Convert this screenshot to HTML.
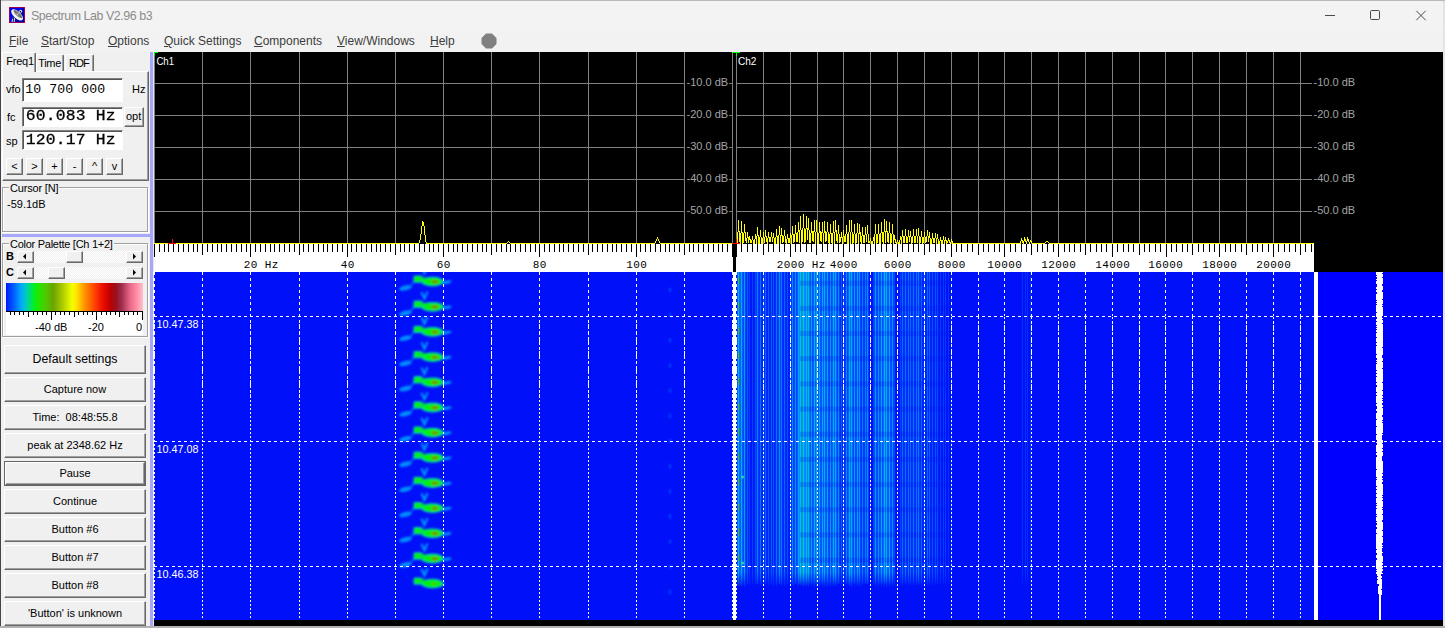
<!DOCTYPE html>
<html lang="en"><head><meta charset="utf-8"><title>Spectrum Lab V2.96 b3</title>
<style>

html,body{margin:0;padding:0}
body{width:1445px;height:628px;position:relative;overflow:hidden;background:#f0f0f0;font-family:'Liberation Sans', sans-serif;font-size:11px;color:#000}
.abs{position:absolute}
.t{position:absolute;white-space:nowrap;line-height:1}
#titlebar{left:1px;top:1px;width:1443px;height:30px;background:#f3f3f3;border-radius:7px 7px 0 0}
#menubar{left:1px;top:31px;width:1443px;height:21px;background:#f2f2f2}
.menu{position:absolute;top:34px;font-size:12px;line-height:14px;color:#3c3c3c;white-space:nowrap}
.menu u{text-decoration:underline;text-underline-offset:1px}
.btn{position:absolute;box-sizing:border-box;background:#f0f0f0;border-top:1px solid #fff;border-left:1px solid #fff;border-right:1px solid #696969;border-bottom:1px solid #696969;box-shadow:inset -1px -1px 0 #a0a0a0;text-align:center;white-space:nowrap}
.edit{position:absolute;box-sizing:border-box;background:#fff;border-top:1px solid #808080;border-left:1px solid #808080;border-right:1px solid #fff;border-bottom:1px solid #fff;box-shadow:inset 1px 1px 0 #555}
.grp{position:absolute;box-sizing:border-box;border:1px solid #a0a0a0;box-shadow:1px 1px 0 #fff, inset 1px 1px 0 #fff}
.grp>span{position:absolute;left:6px;top:-7px;letter-spacing:-0.17px;background:#f0f0f0;padding:0 1px;line-height:13px;white-space:nowrap}

</style></head><body>
<div class="abs" style="left:0;top:0;width:1445px;height:1px;background:#b9b9b9"></div>
<div class="abs" style="left:0;top:0;width:1px;height:628px;background:#44444a"></div>
<div class="abs" style="left:1px;top:1px;width:1px;height:625px;background:#f4f4f4"></div>
<div class="abs" id="titlebar"></div>
<div class="abs" id="menubar"></div>
<div class="abs" style="left:1443px;top:1px;width:2px;height:627px;background:#e4e4e4"></div>
<div class="abs" style="left:0;top:626px;width:1445px;height:2px;background:#b2b2b2"></div>
<svg class="abs" style="left:9px;top:7px" width="16" height="16" viewBox="0 0 16 16">
<rect x="0" y="0" width="16" height="16" fill="#0000a8"/>
<polygon points="0,0 16,0 0,16" fill="#0000f0"/>
<rect x="0.5" y="0.5" width="15" height="15" fill="none" stroke="#900060" stroke-width="1"/>
<rect x="0" y="0" width="1" height="1" fill="#f00000"/><rect x="15" y="0" width="1" height="1" fill="#f00000"/>
<rect x="0" y="15" width="1" height="1" fill="#f00000"/><rect x="15" y="15" width="1" height="1" fill="#f00000"/>
<path d="M4.2 10 L3 15 M5.6 11 L5.2 15" stroke="#c8c8d8" stroke-width="1.1"/>
<path d="M3.6 10.2 L4.4 12" stroke="#000" stroke-width="1.2"/>
<ellipse cx="8.1" cy="7.9" rx="7.3" ry="3.5" transform="rotate(42 8.1 7.9)" fill="#f4f4f0"/>
<ellipse cx="8.9" cy="7.1" rx="5.6" ry="2.1" transform="rotate(42 8.9 7.1)" fill="#8a8a8a"/>
<path d="M5 3.6 L12.8 10.6" stroke="#4a4a4a" stroke-width="0.8"/>
<path d="M8.4 7.4 L10.6 5.2" stroke="#c0c0c0" stroke-width="0.9"/>
<circle cx="8.3" cy="7.6" r="1.1" fill="#b8b8b8"/>
<circle cx="11.6" cy="4.2" r="1.5" fill="#f0f0e8"/><circle cx="11.4" cy="4.4" r="0.75" fill="#000"/>
</svg>
<div class="t" style="left:31px;top:8.6px;font-size:12.4px;line-height:14px;color:#8c8c8c;letter-spacing:-0.43px">Spectrum Lab V2.96 b3</div>
<svg class="abs" style="left:1310px;top:1px" width="133" height="30" viewBox="0 0 133 30" fill="none" stroke="#4a4a4a" stroke-width="1">
<path d="M15 14.5 H25"/>
<rect x="60.5" y="9.5" width="9" height="9" rx="1.2"/>
<path d="M106.3 9.8 L115.7 19.2 M115.7 9.8 L106.3 19.2"/>
</svg>
<div class="menu" style="left:9px"><u>F</u>ile</div>
<div class="menu" style="left:41px"><u>S</u>tart/Stop</div>
<div class="menu" style="left:108px"><u>O</u>ptions</div>
<div class="menu" style="left:164px"><u>Q</u>uick Settings</div>
<div class="menu" style="left:254px"><u>C</u>omponents</div>
<div class="menu" style="left:337px"><u>V</u>iew/Windows</div>
<div class="menu" style="left:430px"><u>H</u>elp</div>
<svg class="abs" style="left:481px;top:33px" width="16" height="16" viewBox="0 0 16 16"><polygon points="5,0.5 11,0.5 15.5,5 15.5,11 11,15.5 5,15.5 0.5,11 0.5,5" fill="#808080"/></svg>
<div class="abs" style="left:2px;top:52px;width:148px;height:574px;background:#f0f0f0"></div>
<div class="abs" style="left:150px;top:52px;width:3px;height:574px;background:#a6a6fb"></div>
<div class="abs" style="left:153px;top:52px;width:1px;height:574px;background:#e6e6f6"></div>
<div class="abs" style="left:2px;top:234px;width:148px;height:3px;background:#a6a6fb"></div>
<div class="abs" style="left:2px;top:71px;width:147px;height:110px;box-sizing:border-box;border-left:1px solid #fff;border-top:1px solid #fff;border-right:1px solid #696969;border-bottom:1px solid #696969;box-shadow:inset -1px -1px 0 #a0a0a0"></div>
<div class="abs" style="left:36px;top:54px;width:28px;height:17px;box-sizing:border-box;border-left:1px solid #fff;border-top:1px solid #fff;border-right:1px solid #696969;box-shadow:inset -1px 0 0 #a0a0a0;border-radius:2px 2px 0 0"></div>
<div class="abs" style="left:65px;top:54px;width:29px;height:17px;box-sizing:border-box;border-left:1px solid #fff;border-top:1px solid #fff;border-right:1px solid #696969;box-shadow:inset -1px 0 0 #a0a0a0;border-radius:2px 2px 0 0"></div>
<div class="abs" style="left:2px;top:52px;width:34px;height:20px;box-sizing:border-box;background:#f0f0f0;border-left:1px solid #fff;border-top:1px solid #fff;border-right:1px solid #696969;box-shadow:inset -1px 0 0 #a0a0a0;border-radius:2px 2px 0 0"></div>
<div class="t" style="left:6.3px;top:55.99px;font-size:11px;font-family:'Liberation Sans', sans-serif;letter-spacing:-0.25px;">Freq1</div>
<div class="t" style="left:38.3px;top:58.19px;font-size:11px;font-family:'Liberation Sans', sans-serif;letter-spacing:-0.35px;">Time</div>
<div class="t" style="left:69px;top:58.19px;font-size:11px;font-family:'Liberation Sans', sans-serif;letter-spacing:-0.9px;">RDF</div>
<div class="t" style="left:6px;top:83.99px;font-size:11px;font-family:'Liberation Sans', sans-serif;">vfo</div>
<div class="edit" style="left:22px;top:78px;width:101px;height:24px"></div>
<div class="t" style="left:25.3px;top:82.88px;font-size:13.2px;font-family:'Liberation Mono', monospace;letter-spacing:0.08px;">10 700 000</div>
<div class="t" style="left:132px;top:83.99px;font-size:11px;font-family:'Liberation Sans', sans-serif;">Hz</div>
<div class="t" style="left:7px;top:112.49px;font-size:11px;font-family:'Liberation Sans', sans-serif;">fc</div>
<div class="edit" style="left:22px;top:107px;width:101px;height:20px"></div>
<div class="t" style="left:25.8px;top:108.06px;font-size:16.35px;font-family:'Liberation Mono', monospace;font-weight:normal;letter-spacing:0.19px;-webkit-text-stroke:0.32px #000;transform:scaleY(0.88);transform-origin:0 76.68%;">60.083 Hz</div>
<div class="btn" style="left:124px;top:107px;width:20px;height:20px"></div>
<div class="t" style="left:126px;top:111.49px;font-size:11px;font-family:'Liberation Sans', sans-serif;">opt</div>
<div class="t" style="left:6px;top:136.49px;font-size:11px;font-family:'Liberation Sans', sans-serif;">sp</div>
<div class="edit" style="left:22px;top:130px;width:101px;height:20px"></div>
<div class="t" style="left:25.8px;top:132.06px;font-size:16.35px;font-family:'Liberation Mono', monospace;font-weight:normal;letter-spacing:0.19px;-webkit-text-stroke:0.32px #000;transform:scaleY(0.88);transform-origin:0 76.68%;">120.17 Hz</div>
<div class="btn" style="left:6px;top:158px;width:17px;height:17px;font-size:11px;line-height:14px">&lt;</div>
<div class="btn" style="left:26px;top:158px;width:17px;height:17px;font-size:11px;line-height:14px">&gt;</div>
<div class="btn" style="left:46px;top:158px;width:17px;height:17px;font-size:11px;line-height:14px">+</div>
<div class="btn" style="left:66px;top:158px;width:17px;height:17px;font-size:11px;line-height:14px">-</div>
<div class="btn" style="left:86px;top:158px;width:17px;height:17px;font-size:11px;line-height:14px">^</div>
<div class="btn" style="left:106px;top:158px;width:17px;height:17px;font-size:11px;line-height:14px">v</div>
<div class="grp" style="left:2px;top:187px;width:146px;height:45px"><span style="left:6px;top:-6px">Cursor [N]</span></div>
<div class="t" style="left:7px;top:198.89px;font-size:11px;font-family:'Liberation Sans', sans-serif;">-59.1dB</div>
<div class="grp" style="left:2px;top:243px;width:146px;height:94px"><span style="left:6px;top:-6px;letter-spacing:-0.27px">Color Palette [Ch 1+2]</span></div>
<div class="t" style="left:6px;top:251.09px;font-size:11px;font-family:'Liberation Sans', sans-serif;font-weight:bold;">B</div>
<div class="t" style="left:6px;top:267.09px;font-size:11px;font-family:'Liberation Sans', sans-serif;font-weight:bold;">C</div>
<div class="abs" style="left:17px;top:251px;width:126px;height:12px;background-color:#fff;background-image:linear-gradient(45deg,#f0f0f0 25%,transparent 25%,transparent 75%,#f0f0f0 75%),linear-gradient(45deg,#f0f0f0 25%,transparent 25%,transparent 75%,#f0f0f0 75%);background-size:2px 2px;background-position:0 0,1px 1px"></div><div class="btn" style="left:17px;top:251px;width:17px;height:12px"></div><svg class="abs" style="left:0;top:0" width="150" height="300"><polygon points="23,256.5 26,253.5 26,259.5" fill="#000"/></svg><div class="btn" style="left:126px;top:251px;width:17px;height:12px"></div><svg class="abs" style="left:0;top:0" width="150" height="300"><polygon points="136,256.5 133,253.5 133,259.5" fill="#000"/></svg><div class="btn" style="left:66px;top:251px;width:17px;height:12px"></div>
<div class="abs" style="left:17px;top:267px;width:126px;height:12px;background-color:#fff;background-image:linear-gradient(45deg,#f0f0f0 25%,transparent 25%,transparent 75%,#f0f0f0 75%),linear-gradient(45deg,#f0f0f0 25%,transparent 25%,transparent 75%,#f0f0f0 75%);background-size:2px 2px;background-position:0 0,1px 1px"></div><div class="btn" style="left:17px;top:267px;width:17px;height:12px"></div><svg class="abs" style="left:0;top:0" width="150" height="300"><polygon points="23,272.5 26,269.5 26,275.5" fill="#000"/></svg><div class="btn" style="left:126px;top:267px;width:17px;height:12px"></div><svg class="abs" style="left:0;top:0" width="150" height="300"><polygon points="136,272.5 133,269.5 133,275.5" fill="#000"/></svg><div class="btn" style="left:48px;top:267px;width:17px;height:12px"></div>
<div class="abs" style="left:6px;top:283px;width:137px;height:28px;background:linear-gradient(to right,#0018ff 0px,#0060ff 8px,#00a8ff 15px,#00d0b0 21px,#00f020 28px,#20e800 32px,#50c800 40px,#6aa400 47px,#a8c800 56px,#f0ff00 66px,#ffe800 70px,#ff9800 78px,#ff4800 88px,#f01000 96px,#c00000 104px,#981020 110px,#a03050 116px,#e86888 124px,#ff88a0 130px,#ffc0cc 137px)"></div>
<div class="abs" style="left:6px;top:311px;width:137px;height:24px;background:#fff"></div>
<svg class="abs" style="left:0;top:300px" width="150" height="40" shape-rendering="crispEdges"><rect x="6" y="11" width="137" height="1" fill="#000"/><rect x="142" y="11" width="1" height="9" fill="#000"/><rect x="137" y="11" width="1" height="4" fill="#000"/><rect x="133" y="11" width="1" height="4" fill="#000"/><rect x="128" y="11" width="1" height="4" fill="#000"/><rect x="124" y="11" width="1" height="4" fill="#000"/><rect x="119" y="11" width="1" height="6" fill="#000"/><rect x="115" y="11" width="1" height="4" fill="#000"/><rect x="110" y="11" width="1" height="4" fill="#000"/><rect x="106" y="11" width="1" height="4" fill="#000"/><rect x="101" y="11" width="1" height="4" fill="#000"/><rect x="96" y="11" width="1" height="9" fill="#000"/><rect x="92" y="11" width="1" height="4" fill="#000"/><rect x="87" y="11" width="1" height="4" fill="#000"/><rect x="83" y="11" width="1" height="4" fill="#000"/><rect x="78" y="11" width="1" height="4" fill="#000"/><rect x="74" y="11" width="1" height="6" fill="#000"/><rect x="69" y="11" width="1" height="4" fill="#000"/><rect x="64" y="11" width="1" height="4" fill="#000"/><rect x="60" y="11" width="1" height="4" fill="#000"/><rect x="55" y="11" width="1" height="4" fill="#000"/><rect x="51" y="11" width="1" height="9" fill="#000"/><rect x="46" y="11" width="1" height="4" fill="#000"/><rect x="42" y="11" width="1" height="4" fill="#000"/><rect x="37" y="11" width="1" height="4" fill="#000"/><rect x="33" y="11" width="1" height="4" fill="#000"/><rect x="28" y="11" width="1" height="6" fill="#000"/><rect x="23" y="11" width="1" height="4" fill="#000"/><rect x="19" y="11" width="1" height="4" fill="#000"/><rect x="14" y="11" width="1" height="4" fill="#000"/><rect x="10" y="11" width="1" height="4" fill="#000"/></svg>
<div class="t" style="left:35px;top:322.29px;font-size:11px;font-family:'Liberation Sans', sans-serif;">-40 dB</div>
<div class="t" style="left:88px;top:322.29px;font-size:11px;font-family:'Liberation Sans', sans-serif;">-20</div>
<div class="t" style="left:136px;top:322.29px;font-size:11px;font-family:'Liberation Sans', sans-serif;">0</div>
<div class="btn" style="left:4px;top:345px;width:142px;height:29px"></div>
<div class="t" style="left:4px;width:142px;text-align:center;top:352px;font-size:12.3px;line-height:14px">Default settings</div>
<div class="btn" style="left:4px;top:377px;width:142px;height:25px"></div>
<div class="t" style="left:4px;width:142px;text-align:center;top:383px;font-size:11px;line-height:13px">Capture now</div>
<div class="btn" style="left:4px;top:405px;width:142px;height:25px"></div>
<div class="t" style="left:4px;width:142px;text-align:center;top:411px;font-size:11px;line-height:13px">Time:&nbsp; 08:48:55.8</div>
<div class="btn" style="left:4px;top:433px;width:142px;height:25px"></div>
<div class="t" style="left:4px;width:142px;text-align:center;top:439px;font-size:11px;line-height:13px">peak at 2348.62 Hz</div>
<div class="abs" style="left:4px;top:461px;width:142px;height:25px;box-sizing:border-box;border:1px solid #646464"></div>
<div class="btn" style="left:5px;top:462px;width:140px;height:23px"></div>
<div class="t" style="left:4px;width:142px;text-align:center;top:467px;font-size:11px;line-height:13px">Pause</div>
<div class="btn" style="left:4px;top:489px;width:142px;height:25px"></div>
<div class="t" style="left:4px;width:142px;text-align:center;top:495px;font-size:11px;line-height:13px">Continue</div>
<div class="btn" style="left:4px;top:517px;width:142px;height:25px"></div>
<div class="t" style="left:4px;width:142px;text-align:center;top:523px;font-size:11px;line-height:13px">Button #6</div>
<div class="btn" style="left:4px;top:545px;width:142px;height:25px"></div>
<div class="t" style="left:4px;width:142px;text-align:center;top:551px;font-size:11px;line-height:13px">Button #7</div>
<div class="btn" style="left:4px;top:573px;width:142px;height:25px"></div>
<div class="t" style="left:4px;width:142px;text-align:center;top:579px;font-size:11px;line-height:13px">Button #8</div>
<div class="btn" style="left:4px;top:601px;width:142px;height:25px"></div>
<div class="t" style="left:4px;width:142px;text-align:center;top:607px;font-size:11px;line-height:13px">'Button' is unknown</div>
<svg class="abs" style="left:0;top:0" width="1445" height="628" viewBox="0 0 1445 628" shape-rendering="crispEdges"><rect x="154" y="52" width="1289" height="574" fill="#000"/><rect x="154" y="52" width="1" height="192" fill="#808080"/><rect x="202" y="52" width="1" height="192" fill="#808080"/><rect x="250" y="52" width="1" height="192" fill="#808080"/><rect x="299" y="52" width="1" height="192" fill="#808080"/><rect x="347" y="52" width="1" height="192" fill="#808080"/><rect x="395" y="52" width="1" height="192" fill="#808080"/><rect x="443" y="52" width="1" height="192" fill="#808080"/><rect x="491" y="52" width="1" height="192" fill="#808080"/><rect x="539" y="52" width="1" height="192" fill="#808080"/><rect x="588" y="52" width="1" height="192" fill="#808080"/><rect x="636" y="52" width="1" height="192" fill="#808080"/><rect x="684" y="52" width="1" height="192" fill="#808080"/><rect x="732" y="52" width="1" height="192" fill="#808080"/><rect x="736" y="52" width="1" height="192" fill="#808080"/><rect x="763" y="52" width="1" height="192" fill="#808080"/><rect x="790" y="52" width="1" height="192" fill="#808080"/><rect x="817" y="52" width="1" height="192" fill="#808080"/><rect x="843" y="52" width="1" height="192" fill="#808080"/><rect x="870" y="52" width="1" height="192" fill="#808080"/><rect x="897" y="52" width="1" height="192" fill="#808080"/><rect x="924" y="52" width="1" height="192" fill="#808080"/><rect x="951" y="52" width="1" height="192" fill="#808080"/><rect x="978" y="52" width="1" height="192" fill="#808080"/><rect x="1004" y="52" width="1" height="192" fill="#808080"/><rect x="1031" y="52" width="1" height="192" fill="#808080"/><rect x="1058" y="52" width="1" height="192" fill="#808080"/><rect x="1085" y="52" width="1" height="192" fill="#808080"/><rect x="1112" y="52" width="1" height="192" fill="#808080"/><rect x="1139" y="52" width="1" height="192" fill="#808080"/><rect x="1165" y="52" width="1" height="192" fill="#808080"/><rect x="1192" y="52" width="1" height="192" fill="#808080"/><rect x="1219" y="52" width="1" height="192" fill="#808080"/><rect x="1246" y="52" width="1" height="192" fill="#808080"/><rect x="1273" y="52" width="1" height="192" fill="#808080"/><rect x="1300" y="52" width="1" height="192" fill="#808080"/><rect x="154" y="83" width="531" height="1" fill="#808080"/><rect x="729" y="83" width="4" height="1" fill="#808080"/><rect x="736" y="83" width="576" height="1" fill="#808080"/><text x="686.5" y="86.2" font-family="'Liberation Sans', sans-serif" font-size="11" fill="#a4a4a4">-10.0 dB</text><text x="1313.5" y="86.2" font-family="'Liberation Sans', sans-serif" font-size="11" fill="#a4a4a4">-10.0 dB</text><rect x="154" y="115" width="531" height="1" fill="#808080"/><rect x="729" y="115" width="4" height="1" fill="#808080"/><rect x="736" y="115" width="576" height="1" fill="#808080"/><text x="686.5" y="118.2" font-family="'Liberation Sans', sans-serif" font-size="11" fill="#a4a4a4">-20.0 dB</text><text x="1313.5" y="118.2" font-family="'Liberation Sans', sans-serif" font-size="11" fill="#a4a4a4">-20.0 dB</text><rect x="154" y="147" width="531" height="1" fill="#808080"/><rect x="729" y="147" width="4" height="1" fill="#808080"/><rect x="736" y="147" width="576" height="1" fill="#808080"/><text x="686.5" y="150.2" font-family="'Liberation Sans', sans-serif" font-size="11" fill="#a4a4a4">-30.0 dB</text><text x="1313.5" y="150.2" font-family="'Liberation Sans', sans-serif" font-size="11" fill="#a4a4a4">-30.0 dB</text><rect x="154" y="179" width="531" height="1" fill="#808080"/><rect x="729" y="179" width="4" height="1" fill="#808080"/><rect x="736" y="179" width="576" height="1" fill="#808080"/><text x="686.5" y="182.2" font-family="'Liberation Sans', sans-serif" font-size="11" fill="#a4a4a4">-40.0 dB</text><text x="1313.5" y="182.2" font-family="'Liberation Sans', sans-serif" font-size="11" fill="#a4a4a4">-40.0 dB</text><rect x="154" y="211" width="531" height="1" fill="#808080"/><rect x="729" y="211" width="4" height="1" fill="#808080"/><rect x="736" y="211" width="576" height="1" fill="#808080"/><text x="686.5" y="214.2" font-family="'Liberation Sans', sans-serif" font-size="11" fill="#a4a4a4">-50.0 dB</text><text x="1313.5" y="214.2" font-family="'Liberation Sans', sans-serif" font-size="11" fill="#a4a4a4">-50.0 dB</text><text x="156.4" y="65" font-family="'Liberation Sans', sans-serif" font-size="10.5" fill="#fff" textLength="17.6" lengthAdjust="spacingAndGlyphs">Ch1</text><text x="738" y="65" font-family="'Liberation Sans', sans-serif" font-size="10.5" fill="#fff" textLength="18.4" lengthAdjust="spacingAndGlyphs">Ch2</text><rect x="154" y="52" width="4" height="1" fill="#00ff00"/><rect x="154" y="52" width="1" height="4" fill="#00ff00"/><rect x="732" y="52" width="8" height="1" fill="#00ff00"/><rect x="736" y="52" width="1" height="4" fill="#00ff00"/><path d="M736 243h1v1h-1zM737 232h1v11h-1zM738 220h1v12h-1zM739 231h1v11h-1zM740 233h1v11h-1zM741 221h1v12h-1zM742 232h1v12h-1zM743 233h1v10h-1zM744 224h1v9h-1zM745 232h1v9h-1zM746 238h1v5h-1zM747 232h1v6h-1zM748 237h1v6h-1zM749 236h1v4h-1zM750 239h1v4h-1zM751 240h1v3h-1zM752 236h1v4h-1zM753 240h1v4h-1zM754 239h1v5h-1zM755 234h1v5h-1zM756 236h1v8h-1zM757 227h1v9h-1zM758 235h1v9h-1zM759 237h1v7h-1zM760 230h1v7h-1zM761 237h1v7h-1zM762 238h1v6h-1zM763 232h1v6h-1zM764 237h1v6h-1zM765 230h1v7h-1zM766 236h1v6h-1zM767 238h1v6h-1zM768 232h1v6h-1zM769 237h1v5h-1zM770 237h1v5h-1zM771 232h1v5h-1zM772 237h1v5h-1zM773 233h1v5h-1zM774 238h1v6h-1zM775 237h1v7h-1zM776 229h1v8h-1zM777 236h1v8h-1zM778 235h1v9h-1zM779 226h1v9h-1zM780 235h1v9h-1zM781 228h1v8h-1zM782 235h1v8h-1zM783 236h1v6h-1zM784 230h1v6h-1zM785 236h1v7h-1zM786 239h1v5h-1zM787 234h1v5h-1zM788 238h1v5h-1zM789 238h1v5h-1zM790 233h1v5h-1zM791 235h1v9h-1zM792 226h1v9h-1zM793 234h1v9h-1zM794 234h1v8h-1zM795 225h1v9h-1zM796 233h1v9h-1zM797 232h1v10h-1zM798 222h1v10h-1zM799 230h1v13h-1zM800 216h1v14h-1zM801 230h1v14h-1zM802 228h1v14h-1zM803 214h1v14h-1zM804 228h1v15h-1zM805 229h1v13h-1zM806 216h1v13h-1zM807 228h1v12h-1zM808 218h1v12h-1zM809 230h1v13h-1zM810 233h1v10h-1zM811 222h1v11h-1zM812 231h1v10h-1zM813 231h1v11h-1zM814 220h1v12h-1zM815 232h1v12h-1zM816 220h1v12h-1zM817 232h1v12h-1zM818 233h1v11h-1zM819 222h1v11h-1zM820 231h1v10h-1zM821 232h1v10h-1zM822 222h1v11h-1zM823 233h1v11h-1zM824 221h1v12h-1zM825 231h1v11h-1zM826 232h1v9h-1zM827 222h1v10h-1zM828 232h1v11h-1zM829 234h1v10h-1zM830 224h1v10h-1zM831 233h1v10h-1zM832 233h1v11h-1zM833 221h1v12h-1zM834 232h1v12h-1zM835 220h1v12h-1zM836 230h1v11h-1zM837 234h1v9h-1zM838 225h1v9h-1zM839 234h1v9h-1zM840 237h1v5h-1zM841 232h1v6h-1zM842 237h1v7h-1zM843 230h1v7h-1zM844 236h1v6h-1zM845 234h1v8h-1zM846 225h1v9h-1zM847 234h1v10h-1zM848 232h1v12h-1zM849 220h1v12h-1zM850 232h1v12h-1zM851 220h1v12h-1zM852 232h1v12h-1zM853 234h1v9h-1zM854 224h1v10h-1zM855 234h1v10h-1zM856 233h1v10h-1zM857 223h1v10h-1zM858 233h1v11h-1zM859 224h1v10h-1zM860 232h1v10h-1zM861 236h1v8h-1zM862 227h1v9h-1zM863 235h1v8h-1zM864 235h1v8h-1zM865 227h1v8h-1zM866 234h1v8h-1zM867 225h1v9h-1zM868 234h1v9h-1zM869 241h1v2h-1zM870 238h1v3h-1zM871 241h1v3h-1zM872 241h1v3h-1zM873 237h1v4h-1zM874 234h1v10h-1zM875 224h1v10h-1zM876 234h1v10h-1zM877 234h1v9h-1zM878 224h1v10h-1zM879 234h1v10h-1zM880 233h1v11h-1zM881 222h1v11h-1zM882 232h1v10h-1zM883 232h1v12h-1zM884 219h1v13h-1zM885 231h1v12h-1zM886 221h1v11h-1zM887 231h1v11h-1zM888 233h1v10h-1zM889 222h1v11h-1zM890 233h1v11h-1zM891 234h1v9h-1zM892 224h1v10h-1zM893 234h1v10h-1zM894 235h1v5h-1zM895 239h1v4h-1zM896 242h1v2h-1zM897 240h1v2h-1zM898 242h1v2h-1zM899 240h1v4h-1zM900 236h1v4h-1zM901 237h1v7h-1zM902 230h1v7h-1zM903 236h1v7h-1zM904 236h1v7h-1zM905 229h1v7h-1zM906 236h1v7h-1zM907 237h1v6h-1zM908 230h1v7h-1zM909 236h1v6h-1zM910 231h1v6h-1zM911 237h1v7h-1zM912 236h1v7h-1zM913 229h1v7h-1zM914 236h1v7h-1zM915 236h1v7h-1zM916 229h1v7h-1zM917 236h1v7h-1zM918 228h1v8h-1zM919 236h1v8h-1zM920 237h1v6h-1zM921 231h1v6h-1zM922 237h1v7h-1zM923 237h1v6h-1zM924 232h1v5h-1zM925 237h1v6h-1zM926 236h1v6h-1zM927 230h1v6h-1zM928 236h1v6h-1zM929 232h1v6h-1zM930 238h1v6h-1zM931 239h1v5h-1zM932 233h1v6h-1zM933 238h1v5h-1zM934 238h1v5h-1zM935 233h1v5h-1zM936 238h1v6h-1zM937 234h1v5h-1zM938 239h1v5h-1zM939 241h1v3h-1zM940 237h1v4h-1zM941 240h1v4h-1zM942 240h1v4h-1zM943 236h1v4h-1zM944 240h1v4h-1zM945 237h1v4h-1zM946 240h1v4h-1zM947 241h1v2h-1zM948 238h1v3h-1zM949 240h1v3h-1zM950 242h1v2h-1zM951 239h1v3h-1zM952 241h1v3h-1zM953 243h1v1h-1zM954 243h1v1h-1zM955 243h1v1h-1zM956 243h1v1h-1zM957 243h1v1h-1zM958 243h1v1h-1zM959 243h1v1h-1zM960 243h1v1h-1zM961 243h1v1h-1zM962 243h1v1h-1zM963 243h1v1h-1zM964 243h1v1h-1zM965 243h1v1h-1zM966 243h1v1h-1zM967 243h1v1h-1zM968 243h1v1h-1zM969 243h1v1h-1zM970 243h1v1h-1zM971 243h1v1h-1zM972 243h1v1h-1zM973 243h1v1h-1zM974 243h1v1h-1zM975 243h1v1h-1zM976 243h1v1h-1zM977 243h1v1h-1zM978 243h1v1h-1zM979 243h1v1h-1zM980 243h1v1h-1zM981 243h1v1h-1zM982 243h1v1h-1zM983 243h1v1h-1zM984 243h1v1h-1zM985 243h1v1h-1zM986 243h1v1h-1zM987 243h1v1h-1zM988 243h1v1h-1zM989 243h1v1h-1zM990 243h1v1h-1zM991 243h1v1h-1zM992 243h1v1h-1zM993 243h1v1h-1zM994 243h1v1h-1zM995 243h1v1h-1zM996 243h1v1h-1zM997 243h1v1h-1zM998 243h1v1h-1zM999 243h1v1h-1zM1000 243h1v1h-1zM1001 243h1v1h-1zM1002 243h1v1h-1zM1003 243h1v1h-1zM1004 243h1v1h-1zM1005 243h1v1h-1zM1006 243h1v1h-1zM1007 243h1v1h-1zM1008 243h1v1h-1zM1009 243h1v1h-1zM1010 243h1v1h-1zM1011 243h1v1h-1zM1012 243h1v1h-1zM1013 243h1v1h-1zM1014 243h1v1h-1zM1015 243h1v1h-1zM1016 243h1v1h-1zM1017 243h1v1h-1zM1018 243h1v1h-1zM1019 243h1v1h-1zM1020 241h1v3h-1zM1021 238h1v3h-1zM1022 240h1v3h-1zM1023 241h1v3h-1zM1024 237h1v4h-1zM1025 239h1v3h-1zM1026 241h1v3h-1zM1027 237h1v4h-1zM1028 239h1v3h-1zM1029 242h1v2h-1zM1030 240h1v2h-1zM1031 241h1v2h-1zM1032 243h1v1h-1zM1033 243h1v1h-1zM1034 243h1v1h-1zM1035 243h1v1h-1zM1036 243h1v1h-1zM1037 243h1v1h-1zM1038 243h1v1h-1zM1039 243h1v1h-1zM1040 243h1v1h-1zM1041 243h1v1h-1zM1042 243h1v1h-1zM1043 243h1v1h-1zM1044 243h1v1h-1zM1045 242h1v1h-1zM1046 241h1v1h-1zM1047 241h1v1h-1zM1048 242h1v1h-1zM1049 243h1v1h-1zM1050 243h1v1h-1zM1051 243h1v1h-1zM1052 243h1v1h-1zM1053 243h1v1h-1zM1054 243h1v1h-1zM1055 243h1v1h-1zM1056 243h1v1h-1zM1057 243h1v1h-1zM1058 243h1v1h-1zM1059 243h1v1h-1zM1060 243h1v1h-1zM1061 243h1v1h-1zM1062 243h1v1h-1zM1063 243h1v1h-1zM1064 243h1v1h-1zM1065 243h1v1h-1zM1066 243h1v1h-1zM1067 243h1v1h-1zM1068 243h1v1h-1zM1069 243h1v1h-1zM1070 243h1v1h-1zM1071 243h1v1h-1zM1072 243h1v1h-1zM1073 243h1v1h-1zM1074 243h1v1h-1zM1075 243h1v1h-1zM1076 243h1v1h-1zM1077 243h1v1h-1zM1078 243h1v1h-1zM1079 243h1v1h-1zM1080 243h1v1h-1zM1081 243h1v1h-1zM1082 243h1v1h-1zM1083 243h1v1h-1zM1084 243h1v1h-1zM1085 243h1v1h-1zM1086 243h1v1h-1zM1087 243h1v1h-1zM1088 243h1v1h-1zM1089 243h1v1h-1zM1090 243h1v1h-1zM1091 243h1v1h-1zM1092 243h1v1h-1zM1093 243h1v1h-1zM1094 243h1v1h-1zM1095 243h1v1h-1zM1096 243h1v1h-1zM1097 243h1v1h-1zM1098 243h1v1h-1zM1099 243h1v1h-1zM1100 243h1v1h-1zM1101 243h1v1h-1zM1102 243h1v1h-1zM1103 243h1v1h-1zM1104 243h1v1h-1zM1105 243h1v1h-1zM1106 243h1v1h-1zM1107 243h1v1h-1zM1108 243h1v1h-1zM1109 243h1v1h-1zM1110 243h1v1h-1zM1111 243h1v1h-1zM1112 243h1v1h-1zM1113 243h1v1h-1zM1114 243h1v1h-1zM1115 243h1v1h-1zM1116 243h1v1h-1zM1117 243h1v1h-1zM1118 243h1v1h-1zM1119 243h1v1h-1zM1120 243h1v1h-1zM1121 243h1v1h-1zM1122 243h1v1h-1zM1123 243h1v1h-1zM1124 243h1v1h-1zM1125 243h1v1h-1zM1126 243h1v1h-1zM1127 243h1v1h-1zM1128 243h1v1h-1zM1129 243h1v1h-1zM1130 243h1v1h-1zM1131 243h1v1h-1zM1132 243h1v1h-1zM1133 243h1v1h-1zM1134 243h1v1h-1zM1135 243h1v1h-1zM1136 243h1v1h-1zM1137 243h1v1h-1zM1138 243h1v1h-1zM1139 243h1v1h-1zM1140 243h1v1h-1zM1141 243h1v1h-1zM1142 243h1v1h-1zM1143 243h1v1h-1zM1144 243h1v1h-1zM1145 243h1v1h-1zM1146 243h1v1h-1zM1147 243h1v1h-1zM1148 243h1v1h-1zM1149 243h1v1h-1zM1150 243h1v1h-1zM1151 243h1v1h-1zM1152 243h1v1h-1zM1153 243h1v1h-1zM1154 243h1v1h-1zM1155 243h1v1h-1zM1156 243h1v1h-1zM1157 243h1v1h-1zM1158 243h1v1h-1zM1159 243h1v1h-1zM1160 243h1v1h-1zM1161 243h1v1h-1zM1162 243h1v1h-1zM1163 243h1v1h-1zM1164 243h1v1h-1zM1165 243h1v1h-1zM1166 243h1v1h-1zM1167 243h1v1h-1zM1168 243h1v1h-1zM1169 243h1v1h-1zM1170 243h1v1h-1zM1171 243h1v1h-1zM1172 243h1v1h-1zM1173 243h1v1h-1zM1174 243h1v1h-1zM1175 243h1v1h-1zM1176 243h1v1h-1zM1177 243h1v1h-1zM1178 243h1v1h-1zM1179 243h1v1h-1zM1180 243h1v1h-1zM1181 243h1v1h-1zM1182 243h1v1h-1zM1183 243h1v1h-1zM1184 243h1v1h-1zM1185 243h1v1h-1zM1186 243h1v1h-1zM1187 243h1v1h-1zM1188 243h1v1h-1zM1189 243h1v1h-1zM1190 243h1v1h-1zM1191 243h1v1h-1zM1192 243h1v1h-1zM1193 243h1v1h-1zM1194 243h1v1h-1zM1195 243h1v1h-1zM1196 243h1v1h-1zM1197 243h1v1h-1zM1198 243h1v1h-1zM1199 243h1v1h-1zM1200 243h1v1h-1zM1201 243h1v1h-1zM1202 243h1v1h-1zM1203 243h1v1h-1zM1204 243h1v1h-1zM1205 243h1v1h-1zM1206 243h1v1h-1zM1207 243h1v1h-1zM1208 243h1v1h-1zM1209 243h1v1h-1zM1210 243h1v1h-1zM1211 243h1v1h-1zM1212 243h1v1h-1zM1213 243h1v1h-1zM1214 243h1v1h-1zM1215 243h1v1h-1zM1216 243h1v1h-1zM1217 243h1v1h-1zM1218 243h1v1h-1zM1219 243h1v1h-1zM1220 243h1v1h-1zM1221 243h1v1h-1zM1222 243h1v1h-1zM1223 243h1v1h-1zM1224 243h1v1h-1zM1225 243h1v1h-1zM1226 243h1v1h-1zM1227 243h1v1h-1zM1228 243h1v1h-1zM1229 243h1v1h-1zM1230 243h1v1h-1zM1231 243h1v1h-1zM1232 243h1v1h-1zM1233 243h1v1h-1zM1234 243h1v1h-1zM1235 243h1v1h-1zM1236 243h1v1h-1zM1237 243h1v1h-1zM1238 243h1v1h-1zM1239 243h1v1h-1zM1240 243h1v1h-1zM1241 243h1v1h-1zM1242 243h1v1h-1zM1243 243h1v1h-1zM1244 243h1v1h-1zM1245 243h1v1h-1zM1246 243h1v1h-1zM1247 243h1v1h-1zM1248 243h1v1h-1zM1249 243h1v1h-1zM1250 243h1v1h-1zM1251 243h1v1h-1zM1252 243h1v1h-1zM1253 243h1v1h-1zM1254 243h1v1h-1zM1255 243h1v1h-1zM1256 243h1v1h-1zM1257 243h1v1h-1zM1258 243h1v1h-1zM1259 243h1v1h-1zM1260 243h1v1h-1zM1261 243h1v1h-1zM1262 243h1v1h-1zM1263 243h1v1h-1zM1264 243h1v1h-1zM1265 243h1v1h-1zM1266 243h1v1h-1zM1267 243h1v1h-1zM1268 243h1v1h-1zM1269 243h1v1h-1zM1270 243h1v1h-1zM1271 243h1v1h-1zM1272 243h1v1h-1zM1273 243h1v1h-1zM1274 243h1v1h-1zM1275 243h1v1h-1zM1276 243h1v1h-1zM1277 243h1v1h-1zM1278 243h1v1h-1zM1279 243h1v1h-1zM1280 243h1v1h-1zM1281 243h1v1h-1zM1282 243h1v1h-1zM1283 243h1v1h-1zM1284 243h1v1h-1zM1285 243h1v1h-1zM1286 243h1v1h-1zM1287 243h1v1h-1zM1288 243h1v1h-1zM1289 243h1v1h-1zM1290 243h1v1h-1zM1291 243h1v1h-1zM1292 243h1v1h-1zM1293 243h1v1h-1zM1294 243h1v1h-1zM1295 243h1v1h-1zM1296 243h1v1h-1zM1297 243h1v1h-1zM1298 243h1v1h-1zM1299 243h1v1h-1zM1300 243h1v1h-1zM1301 243h1v1h-1zM1302 243h1v1h-1zM1303 243h1v1h-1zM1304 243h1v1h-1zM1305 243h1v1h-1zM1306 243h1v1h-1zM1307 243h1v1h-1zM1308 243h1v1h-1zM1309 243h1v1h-1zM1310 243h1v1h-1zM1311 243h1v1h-1zM1312 243h1v1h-1zM1313 243h1v1h-1z" fill="#ffff00"/><path d="M154 243h1v1h-1zM155 243h1v1h-1zM156 243h1v1h-1zM157 243h1v1h-1zM158 243h1v1h-1zM159 243h1v1h-1zM160 243h1v1h-1zM161 243h1v1h-1zM162 243h1v1h-1zM163 243h1v1h-1zM164 243h1v1h-1zM165 243h1v1h-1zM166 243h1v1h-1zM167 243h1v1h-1zM168 243h1v1h-1zM169 243h1v1h-1zM170 243h1v1h-1zM171 243h1v1h-1zM172 243h1v1h-1zM173 243h1v1h-1zM174 243h1v1h-1zM175 243h1v1h-1zM176 243h1v1h-1zM177 243h1v1h-1zM178 243h1v1h-1zM179 243h1v1h-1zM180 243h1v1h-1zM181 243h1v1h-1zM182 243h1v1h-1zM183 243h1v1h-1zM184 243h1v1h-1zM185 243h1v1h-1zM186 243h1v1h-1zM187 243h1v1h-1zM188 243h1v1h-1zM189 243h1v1h-1zM190 243h1v1h-1zM191 243h1v1h-1zM192 243h1v1h-1zM193 243h1v1h-1zM194 243h1v1h-1zM195 243h1v1h-1zM196 243h1v1h-1zM197 243h1v1h-1zM198 243h1v1h-1zM199 243h1v1h-1zM200 243h1v1h-1zM201 243h1v1h-1zM202 243h1v1h-1zM203 243h1v1h-1zM204 243h1v1h-1zM205 243h1v1h-1zM206 243h1v1h-1zM207 243h1v1h-1zM208 243h1v1h-1zM209 243h1v1h-1zM210 243h1v1h-1zM211 243h1v1h-1zM212 243h1v1h-1zM213 243h1v1h-1zM214 243h1v1h-1zM215 243h1v1h-1zM216 243h1v1h-1zM217 243h1v1h-1zM218 243h1v1h-1zM219 243h1v1h-1zM220 243h1v1h-1zM221 243h1v1h-1zM222 243h1v1h-1zM223 243h1v1h-1zM224 243h1v1h-1zM225 243h1v1h-1zM226 243h1v1h-1zM227 243h1v1h-1zM228 243h1v1h-1zM229 243h1v1h-1zM230 243h1v1h-1zM231 243h1v1h-1zM232 243h1v1h-1zM233 243h1v1h-1zM234 243h1v1h-1zM235 243h1v1h-1zM236 243h1v1h-1zM237 243h1v1h-1zM238 243h1v1h-1zM239 243h1v1h-1zM240 243h1v1h-1zM241 243h1v1h-1zM242 243h1v1h-1zM243 243h1v1h-1zM244 243h1v1h-1zM245 243h1v1h-1zM246 243h1v1h-1zM247 243h1v1h-1zM248 243h1v1h-1zM249 243h1v1h-1zM250 243h1v1h-1zM251 243h1v1h-1zM252 243h1v1h-1zM253 243h1v1h-1zM254 243h1v1h-1zM255 243h1v1h-1zM256 243h1v1h-1zM257 243h1v1h-1zM258 243h1v1h-1zM259 243h1v1h-1zM260 243h1v1h-1zM261 243h1v1h-1zM262 243h1v1h-1zM263 243h1v1h-1zM264 243h1v1h-1zM265 243h1v1h-1zM266 243h1v1h-1zM267 243h1v1h-1zM268 243h1v1h-1zM269 243h1v1h-1zM270 243h1v1h-1zM271 243h1v1h-1zM272 243h1v1h-1zM273 243h1v1h-1zM274 243h1v1h-1zM275 243h1v1h-1zM276 243h1v1h-1zM277 243h1v1h-1zM278 243h1v1h-1zM279 243h1v1h-1zM280 243h1v1h-1zM281 243h1v1h-1zM282 243h1v1h-1zM283 243h1v1h-1zM284 243h1v1h-1zM285 243h1v1h-1zM286 243h1v1h-1zM287 243h1v1h-1zM288 243h1v1h-1zM289 243h1v1h-1zM290 243h1v1h-1zM291 243h1v1h-1zM292 243h1v1h-1zM293 243h1v1h-1zM294 243h1v1h-1zM295 243h1v1h-1zM296 243h1v1h-1zM297 243h1v1h-1zM298 243h1v1h-1zM299 243h1v1h-1zM300 243h1v1h-1zM301 243h1v1h-1zM302 243h1v1h-1zM303 243h1v1h-1zM304 243h1v1h-1zM305 243h1v1h-1zM306 243h1v1h-1zM307 243h1v1h-1zM308 243h1v1h-1zM309 243h1v1h-1zM310 243h1v1h-1zM311 243h1v1h-1zM312 243h1v1h-1zM313 243h1v1h-1zM314 243h1v1h-1zM315 243h1v1h-1zM316 243h1v1h-1zM317 243h1v1h-1zM318 243h1v1h-1zM319 243h1v1h-1zM320 243h1v1h-1zM321 243h1v1h-1zM322 243h1v1h-1zM323 243h1v1h-1zM324 243h1v1h-1zM325 243h1v1h-1zM326 243h1v1h-1zM327 243h1v1h-1zM328 243h1v1h-1zM329 243h1v1h-1zM330 243h1v1h-1zM331 243h1v1h-1zM332 243h1v1h-1zM333 243h1v1h-1zM334 243h1v1h-1zM335 243h1v1h-1zM336 243h1v1h-1zM337 243h1v1h-1zM338 243h1v1h-1zM339 243h1v1h-1zM340 243h1v1h-1zM341 243h1v1h-1zM342 243h1v1h-1zM343 243h1v1h-1zM344 243h1v1h-1zM345 243h1v1h-1zM346 243h1v1h-1zM347 243h1v1h-1zM348 243h1v1h-1zM349 243h1v1h-1zM350 243h1v1h-1zM351 243h1v1h-1zM352 243h1v1h-1zM353 243h1v1h-1zM354 243h1v1h-1zM355 243h1v1h-1zM356 243h1v1h-1zM357 243h1v1h-1zM358 243h1v1h-1zM359 243h1v1h-1zM360 243h1v1h-1zM361 243h1v1h-1zM362 243h1v1h-1zM363 243h1v1h-1zM364 243h1v1h-1zM365 243h1v1h-1zM366 243h1v1h-1zM367 243h1v1h-1zM368 243h1v1h-1zM369 243h1v1h-1zM370 243h1v1h-1zM371 243h1v1h-1zM372 243h1v1h-1zM373 243h1v1h-1zM374 243h1v1h-1zM375 243h1v1h-1zM376 243h1v1h-1zM377 243h1v1h-1zM378 243h1v1h-1zM379 243h1v1h-1zM380 243h1v1h-1zM381 243h1v1h-1zM382 243h1v1h-1zM383 243h1v1h-1zM384 243h1v1h-1zM385 243h1v1h-1zM386 243h1v1h-1zM387 243h1v1h-1zM388 243h1v1h-1zM389 243h1v1h-1zM390 243h1v1h-1zM391 243h1v1h-1zM392 243h1v1h-1zM393 243h1v1h-1zM394 243h1v1h-1zM395 243h1v1h-1zM396 243h1v1h-1zM397 243h1v1h-1zM398 243h1v1h-1zM399 243h1v1h-1zM400 243h1v1h-1zM401 243h1v1h-1zM402 243h1v1h-1zM403 243h1v1h-1zM404 243h1v1h-1zM405 243h1v1h-1zM406 243h1v1h-1zM407 243h1v1h-1zM408 243h1v1h-1zM409 243h1v1h-1zM410 243h1v1h-1zM411 243h1v1h-1zM412 243h1v1h-1zM413 243h1v1h-1zM414 243h1v1h-1zM415 243h1v1h-1zM416 243h1v1h-1zM417 243h1v1h-1zM418 243h1v1h-1zM419 240h1v3h-1zM420 234h1v6h-1zM421 226h1v8h-1zM422 221h1v5h-1zM423 222h1v4h-1zM424 226h1v9h-1zM425 235h1v7h-1zM426 242h1v2h-1zM427 243h1v1h-1zM428 243h1v1h-1zM429 243h1v1h-1zM430 243h1v1h-1zM431 243h1v1h-1zM432 243h1v1h-1zM433 243h1v1h-1zM434 243h1v1h-1zM435 243h1v1h-1zM436 243h1v1h-1zM437 243h1v1h-1zM438 243h1v1h-1zM439 243h1v1h-1zM440 243h1v1h-1zM441 243h1v1h-1zM442 243h1v1h-1zM443 243h1v1h-1zM444 243h1v1h-1zM445 243h1v1h-1zM446 243h1v1h-1zM447 243h1v1h-1zM448 243h1v1h-1zM449 243h1v1h-1zM450 243h1v1h-1zM451 243h1v1h-1zM452 243h1v1h-1zM453 243h1v1h-1zM454 243h1v1h-1zM455 243h1v1h-1zM456 243h1v1h-1zM457 243h1v1h-1zM458 243h1v1h-1zM459 243h1v1h-1zM460 243h1v1h-1zM461 243h1v1h-1zM462 243h1v1h-1zM463 243h1v1h-1zM464 243h1v1h-1zM465 243h1v1h-1zM466 243h1v1h-1zM467 243h1v1h-1zM468 243h1v1h-1zM469 243h1v1h-1zM470 243h1v1h-1zM471 243h1v1h-1zM472 243h1v1h-1zM473 243h1v1h-1zM474 243h1v1h-1zM475 243h1v1h-1zM476 243h1v1h-1zM477 243h1v1h-1zM478 243h1v1h-1zM479 243h1v1h-1zM480 243h1v1h-1zM481 243h1v1h-1zM482 243h1v1h-1zM483 243h1v1h-1zM484 243h1v1h-1zM485 243h1v1h-1zM486 243h1v1h-1zM487 243h1v1h-1zM488 243h1v1h-1zM489 243h1v1h-1zM490 243h1v1h-1zM491 243h1v1h-1zM492 243h1v1h-1zM493 243h1v1h-1zM494 243h1v1h-1zM495 243h1v1h-1zM496 243h1v1h-1zM497 243h1v1h-1zM498 243h1v1h-1zM499 243h1v1h-1zM500 243h1v1h-1zM501 243h1v1h-1zM502 243h1v1h-1zM503 243h1v1h-1zM504 243h1v1h-1zM505 243h1v1h-1zM506 243h1v1h-1zM507 242h1v1h-1zM508 241h1v1h-1zM509 242h1v1h-1zM510 243h1v1h-1zM511 243h1v1h-1zM512 243h1v1h-1zM513 243h1v1h-1zM514 243h1v1h-1zM515 243h1v1h-1zM516 243h1v1h-1zM517 243h1v1h-1zM518 243h1v1h-1zM519 243h1v1h-1zM520 243h1v1h-1zM521 243h1v1h-1zM522 243h1v1h-1zM523 243h1v1h-1zM524 243h1v1h-1zM525 243h1v1h-1zM526 243h1v1h-1zM527 243h1v1h-1zM528 243h1v1h-1zM529 243h1v1h-1zM530 243h1v1h-1zM531 243h1v1h-1zM532 243h1v1h-1zM533 243h1v1h-1zM534 243h1v1h-1zM535 243h1v1h-1zM536 243h1v1h-1zM537 243h1v1h-1zM538 243h1v1h-1zM539 243h1v1h-1zM540 243h1v1h-1zM541 243h1v1h-1zM542 243h1v1h-1zM543 243h1v1h-1zM544 243h1v1h-1zM545 243h1v1h-1zM546 243h1v1h-1zM547 243h1v1h-1zM548 243h1v1h-1zM549 243h1v1h-1zM550 243h1v1h-1zM551 243h1v1h-1zM552 243h1v1h-1zM553 243h1v1h-1zM554 243h1v1h-1zM555 243h1v1h-1zM556 243h1v1h-1zM557 243h1v1h-1zM558 243h1v1h-1zM559 243h1v1h-1zM560 243h1v1h-1zM561 243h1v1h-1zM562 243h1v1h-1zM563 243h1v1h-1zM564 243h1v1h-1zM565 243h1v1h-1zM566 243h1v1h-1zM567 243h1v1h-1zM568 243h1v1h-1zM569 243h1v1h-1zM570 243h1v1h-1zM571 243h1v1h-1zM572 243h1v1h-1zM573 243h1v1h-1zM574 243h1v1h-1zM575 243h1v1h-1zM576 243h1v1h-1zM577 243h1v1h-1zM578 243h1v1h-1zM579 243h1v1h-1zM580 243h1v1h-1zM581 243h1v1h-1zM582 243h1v1h-1zM583 243h1v1h-1zM584 243h1v1h-1zM585 243h1v1h-1zM586 243h1v1h-1zM587 243h1v1h-1zM588 243h1v1h-1zM589 243h1v1h-1zM590 243h1v1h-1zM591 243h1v1h-1zM592 243h1v1h-1zM593 243h1v1h-1zM594 243h1v1h-1zM595 243h1v1h-1zM596 243h1v1h-1zM597 243h1v1h-1zM598 243h1v1h-1zM599 243h1v1h-1zM600 243h1v1h-1zM601 243h1v1h-1zM602 243h1v1h-1zM603 243h1v1h-1zM604 243h1v1h-1zM605 243h1v1h-1zM606 243h1v1h-1zM607 243h1v1h-1zM608 243h1v1h-1zM609 243h1v1h-1zM610 243h1v1h-1zM611 243h1v1h-1zM612 243h1v1h-1zM613 243h1v1h-1zM614 243h1v1h-1zM615 243h1v1h-1zM616 243h1v1h-1zM617 243h1v1h-1zM618 243h1v1h-1zM619 243h1v1h-1zM620 243h1v1h-1zM621 243h1v1h-1zM622 243h1v1h-1zM623 243h1v1h-1zM624 243h1v1h-1zM625 243h1v1h-1zM626 243h1v1h-1zM627 243h1v1h-1zM628 243h1v1h-1zM629 243h1v1h-1zM630 243h1v1h-1zM631 243h1v1h-1zM632 243h1v1h-1zM633 243h1v1h-1zM634 243h1v1h-1zM635 243h1v1h-1zM636 243h1v1h-1zM637 243h1v1h-1zM638 243h1v1h-1zM639 243h1v1h-1zM640 243h1v1h-1zM641 243h1v1h-1zM642 243h1v1h-1zM643 243h1v1h-1zM644 243h1v1h-1zM645 243h1v1h-1zM646 243h1v1h-1zM647 243h1v1h-1zM648 243h1v1h-1zM649 243h1v1h-1zM650 243h1v1h-1zM651 243h1v1h-1zM652 243h1v1h-1zM653 243h1v1h-1zM654 243h1v1h-1zM655 241h1v2h-1zM656 239h1v2h-1zM657 237h1v2h-1zM658 239h1v2h-1zM659 241h1v2h-1zM660 243h1v1h-1zM661 243h1v1h-1zM662 243h1v1h-1zM663 243h1v1h-1zM664 243h1v1h-1zM665 243h1v1h-1zM666 243h1v1h-1zM667 243h1v1h-1zM668 243h1v1h-1zM669 243h1v1h-1zM670 243h1v1h-1zM671 243h1v1h-1zM672 243h1v1h-1zM673 243h1v1h-1zM674 243h1v1h-1zM675 243h1v1h-1zM676 243h1v1h-1zM677 243h1v1h-1zM678 243h1v1h-1zM679 243h1v1h-1zM680 243h1v1h-1zM681 243h1v1h-1zM682 243h1v1h-1zM683 243h1v1h-1zM684 243h1v1h-1zM685 243h1v1h-1zM686 243h1v1h-1zM687 243h1v1h-1zM688 243h1v1h-1zM689 243h1v1h-1zM690 243h1v1h-1zM691 243h1v1h-1zM692 243h1v1h-1zM693 243h1v1h-1zM694 243h1v1h-1zM695 243h1v1h-1zM696 243h1v1h-1zM697 243h1v1h-1zM698 243h1v1h-1zM699 243h1v1h-1zM700 243h1v1h-1zM701 243h1v1h-1zM702 243h1v1h-1zM703 243h1v1h-1zM704 243h1v1h-1zM705 243h1v1h-1zM706 243h1v1h-1zM707 243h1v1h-1zM708 243h1v1h-1zM709 243h1v1h-1zM710 243h1v1h-1zM711 243h1v1h-1zM712 243h1v1h-1zM713 243h1v1h-1zM714 243h1v1h-1zM715 243h1v1h-1zM716 243h1v1h-1zM717 243h1v1h-1zM718 243h1v1h-1zM719 243h1v1h-1zM720 243h1v1h-1zM721 243h1v1h-1zM722 243h1v1h-1zM723 243h1v1h-1zM724 243h1v1h-1zM725 243h1v1h-1zM726 243h1v1h-1zM727 243h1v1h-1zM728 243h1v1h-1zM729 243h1v1h-1zM730 243h1v1h-1zM731 243h1v1h-1zM732 243h1v1h-1z" fill="#ffff00"/><rect x="733" y="243" width="4" height="1" fill="#ffff00"/><rect x="168" y="243" width="8" height="1" fill="#ff0000"/><rect x="172" y="239" width="1" height="5" fill="#ff0000"/><rect x="732" y="243" width="8" height="1" fill="#ff0000"/><rect x="736" y="239" width="1" height="5" fill="#ff0000"/><rect x="154" y="244" width="1160" height="28" fill="#fff"/><rect x="154" y="244" width="1" height="13" fill="#000"/><rect x="159" y="244" width="1" height="8" fill="#000"/><rect x="164" y="244" width="1" height="8" fill="#000"/><rect x="168" y="244" width="1" height="8" fill="#000"/><rect x="173" y="244" width="1" height="8" fill="#000"/><rect x="178" y="244" width="1" height="8" fill="#000"/><rect x="183" y="244" width="1" height="8" fill="#000"/><rect x="188" y="244" width="1" height="8" fill="#000"/><rect x="193" y="244" width="1" height="8" fill="#000"/><rect x="197" y="244" width="1" height="8" fill="#000"/><rect x="202" y="244" width="1" height="11" fill="#000"/><rect x="207" y="244" width="1" height="8" fill="#000"/><rect x="212" y="244" width="1" height="8" fill="#000"/><rect x="217" y="244" width="1" height="8" fill="#000"/><rect x="221" y="244" width="1" height="8" fill="#000"/><rect x="226" y="244" width="1" height="8" fill="#000"/><rect x="231" y="244" width="1" height="8" fill="#000"/><rect x="236" y="244" width="1" height="8" fill="#000"/><rect x="241" y="244" width="1" height="8" fill="#000"/><rect x="246" y="244" width="1" height="8" fill="#000"/><rect x="250" y="244" width="1" height="13" fill="#000"/><rect x="255" y="244" width="1" height="8" fill="#000"/><rect x="260" y="244" width="1" height="8" fill="#000"/><rect x="265" y="244" width="1" height="8" fill="#000"/><rect x="270" y="244" width="1" height="8" fill="#000"/><rect x="274" y="244" width="1" height="8" fill="#000"/><rect x="279" y="244" width="1" height="8" fill="#000"/><rect x="284" y="244" width="1" height="8" fill="#000"/><rect x="289" y="244" width="1" height="8" fill="#000"/><rect x="294" y="244" width="1" height="8" fill="#000"/><rect x="299" y="244" width="1" height="11" fill="#000"/><rect x="303" y="244" width="1" height="8" fill="#000"/><rect x="308" y="244" width="1" height="8" fill="#000"/><rect x="313" y="244" width="1" height="8" fill="#000"/><rect x="318" y="244" width="1" height="8" fill="#000"/><rect x="323" y="244" width="1" height="8" fill="#000"/><rect x="327" y="244" width="1" height="8" fill="#000"/><rect x="332" y="244" width="1" height="8" fill="#000"/><rect x="337" y="244" width="1" height="8" fill="#000"/><rect x="342" y="244" width="1" height="8" fill="#000"/><rect x="347" y="244" width="1" height="13" fill="#000"/><rect x="351" y="244" width="1" height="8" fill="#000"/><rect x="356" y="244" width="1" height="8" fill="#000"/><rect x="361" y="244" width="1" height="8" fill="#000"/><rect x="366" y="244" width="1" height="8" fill="#000"/><rect x="371" y="244" width="1" height="8" fill="#000"/><rect x="376" y="244" width="1" height="8" fill="#000"/><rect x="380" y="244" width="1" height="8" fill="#000"/><rect x="385" y="244" width="1" height="8" fill="#000"/><rect x="390" y="244" width="1" height="8" fill="#000"/><rect x="395" y="244" width="1" height="11" fill="#000"/><rect x="400" y="244" width="1" height="8" fill="#000"/><rect x="404" y="244" width="1" height="8" fill="#000"/><rect x="409" y="244" width="1" height="8" fill="#000"/><rect x="414" y="244" width="1" height="8" fill="#000"/><rect x="419" y="244" width="1" height="8" fill="#000"/><rect x="424" y="244" width="1" height="8" fill="#000"/><rect x="429" y="244" width="1" height="8" fill="#000"/><rect x="433" y="244" width="1" height="8" fill="#000"/><rect x="438" y="244" width="1" height="8" fill="#000"/><rect x="443" y="244" width="1" height="13" fill="#000"/><rect x="448" y="244" width="1" height="8" fill="#000"/><rect x="453" y="244" width="1" height="8" fill="#000"/><rect x="457" y="244" width="1" height="8" fill="#000"/><rect x="462" y="244" width="1" height="8" fill="#000"/><rect x="467" y="244" width="1" height="8" fill="#000"/><rect x="472" y="244" width="1" height="8" fill="#000"/><rect x="477" y="244" width="1" height="8" fill="#000"/><rect x="482" y="244" width="1" height="8" fill="#000"/><rect x="486" y="244" width="1" height="8" fill="#000"/><rect x="491" y="244" width="1" height="11" fill="#000"/><rect x="496" y="244" width="1" height="8" fill="#000"/><rect x="501" y="244" width="1" height="8" fill="#000"/><rect x="506" y="244" width="1" height="8" fill="#000"/><rect x="510" y="244" width="1" height="8" fill="#000"/><rect x="515" y="244" width="1" height="8" fill="#000"/><rect x="520" y="244" width="1" height="8" fill="#000"/><rect x="525" y="244" width="1" height="8" fill="#000"/><rect x="530" y="244" width="1" height="8" fill="#000"/><rect x="535" y="244" width="1" height="8" fill="#000"/><rect x="539" y="244" width="1" height="13" fill="#000"/><rect x="544" y="244" width="1" height="8" fill="#000"/><rect x="549" y="244" width="1" height="8" fill="#000"/><rect x="554" y="244" width="1" height="8" fill="#000"/><rect x="559" y="244" width="1" height="8" fill="#000"/><rect x="563" y="244" width="1" height="8" fill="#000"/><rect x="568" y="244" width="1" height="8" fill="#000"/><rect x="573" y="244" width="1" height="8" fill="#000"/><rect x="578" y="244" width="1" height="8" fill="#000"/><rect x="583" y="244" width="1" height="8" fill="#000"/><rect x="588" y="244" width="1" height="11" fill="#000"/><rect x="592" y="244" width="1" height="8" fill="#000"/><rect x="597" y="244" width="1" height="8" fill="#000"/><rect x="602" y="244" width="1" height="8" fill="#000"/><rect x="607" y="244" width="1" height="8" fill="#000"/><rect x="612" y="244" width="1" height="8" fill="#000"/><rect x="616" y="244" width="1" height="8" fill="#000"/><rect x="621" y="244" width="1" height="8" fill="#000"/><rect x="626" y="244" width="1" height="8" fill="#000"/><rect x="631" y="244" width="1" height="8" fill="#000"/><rect x="636" y="244" width="1" height="13" fill="#000"/><rect x="640" y="244" width="1" height="8" fill="#000"/><rect x="645" y="244" width="1" height="8" fill="#000"/><rect x="650" y="244" width="1" height="8" fill="#000"/><rect x="655" y="244" width="1" height="8" fill="#000"/><rect x="660" y="244" width="1" height="8" fill="#000"/><rect x="665" y="244" width="1" height="8" fill="#000"/><rect x="669" y="244" width="1" height="8" fill="#000"/><rect x="674" y="244" width="1" height="8" fill="#000"/><rect x="679" y="244" width="1" height="8" fill="#000"/><rect x="684" y="244" width="1" height="11" fill="#000"/><rect x="689" y="244" width="1" height="8" fill="#000"/><rect x="693" y="244" width="1" height="8" fill="#000"/><rect x="698" y="244" width="1" height="8" fill="#000"/><rect x="703" y="244" width="1" height="8" fill="#000"/><rect x="708" y="244" width="1" height="8" fill="#000"/><rect x="713" y="244" width="1" height="8" fill="#000"/><rect x="718" y="244" width="1" height="8" fill="#000"/><rect x="722" y="244" width="1" height="8" fill="#000"/><rect x="727" y="244" width="1" height="8" fill="#000"/><rect x="732" y="244" width="1" height="13" fill="#000"/><rect x="741" y="244" width="1" height="8" fill="#000"/><rect x="747" y="244" width="1" height="8" fill="#000"/><rect x="752" y="244" width="1" height="8" fill="#000"/><rect x="757" y="244" width="1" height="8" fill="#000"/><rect x="763" y="244" width="1" height="11" fill="#000"/><rect x="768" y="244" width="1" height="8" fill="#000"/><rect x="773" y="244" width="1" height="8" fill="#000"/><rect x="779" y="244" width="1" height="8" fill="#000"/><rect x="784" y="244" width="1" height="8" fill="#000"/><rect x="790" y="244" width="1" height="13" fill="#000"/><rect x="795" y="244" width="1" height="8" fill="#000"/><rect x="800" y="244" width="1" height="8" fill="#000"/><rect x="806" y="244" width="1" height="8" fill="#000"/><rect x="811" y="244" width="1" height="8" fill="#000"/><rect x="816" y="244" width="1" height="11" fill="#000"/><rect x="822" y="244" width="1" height="8" fill="#000"/><rect x="827" y="244" width="1" height="8" fill="#000"/><rect x="833" y="244" width="1" height="8" fill="#000"/><rect x="838" y="244" width="1" height="8" fill="#000"/><rect x="843" y="244" width="1" height="13" fill="#000"/><rect x="849" y="244" width="1" height="8" fill="#000"/><rect x="854" y="244" width="1" height="8" fill="#000"/><rect x="859" y="244" width="1" height="8" fill="#000"/><rect x="865" y="244" width="1" height="8" fill="#000"/><rect x="870" y="244" width="1" height="11" fill="#000"/><rect x="875" y="244" width="1" height="8" fill="#000"/><rect x="881" y="244" width="1" height="8" fill="#000"/><rect x="886" y="244" width="1" height="8" fill="#000"/><rect x="892" y="244" width="1" height="8" fill="#000"/><rect x="897" y="244" width="1" height="13" fill="#000"/><rect x="902" y="244" width="1" height="8" fill="#000"/><rect x="908" y="244" width="1" height="8" fill="#000"/><rect x="913" y="244" width="1" height="8" fill="#000"/><rect x="918" y="244" width="1" height="8" fill="#000"/><rect x="924" y="244" width="1" height="11" fill="#000"/><rect x="929" y="244" width="1" height="8" fill="#000"/><rect x="935" y="244" width="1" height="8" fill="#000"/><rect x="940" y="244" width="1" height="8" fill="#000"/><rect x="945" y="244" width="1" height="8" fill="#000"/><rect x="951" y="244" width="1" height="13" fill="#000"/><rect x="956" y="244" width="1" height="8" fill="#000"/><rect x="961" y="244" width="1" height="8" fill="#000"/><rect x="967" y="244" width="1" height="8" fill="#000"/><rect x="972" y="244" width="1" height="8" fill="#000"/><rect x="978" y="244" width="1" height="11" fill="#000"/><rect x="983" y="244" width="1" height="8" fill="#000"/><rect x="988" y="244" width="1" height="8" fill="#000"/><rect x="994" y="244" width="1" height="8" fill="#000"/><rect x="999" y="244" width="1" height="8" fill="#000"/><rect x="1004" y="244" width="1" height="13" fill="#000"/><rect x="1010" y="244" width="1" height="8" fill="#000"/><rect x="1015" y="244" width="1" height="8" fill="#000"/><rect x="1021" y="244" width="1" height="8" fill="#000"/><rect x="1026" y="244" width="1" height="8" fill="#000"/><rect x="1031" y="244" width="1" height="11" fill="#000"/><rect x="1037" y="244" width="1" height="8" fill="#000"/><rect x="1042" y="244" width="1" height="8" fill="#000"/><rect x="1047" y="244" width="1" height="8" fill="#000"/><rect x="1053" y="244" width="1" height="8" fill="#000"/><rect x="1058" y="244" width="1" height="13" fill="#000"/><rect x="1064" y="244" width="1" height="8" fill="#000"/><rect x="1069" y="244" width="1" height="8" fill="#000"/><rect x="1074" y="244" width="1" height="8" fill="#000"/><rect x="1080" y="244" width="1" height="8" fill="#000"/><rect x="1085" y="244" width="1" height="11" fill="#000"/><rect x="1090" y="244" width="1" height="8" fill="#000"/><rect x="1096" y="244" width="1" height="8" fill="#000"/><rect x="1101" y="244" width="1" height="8" fill="#000"/><rect x="1106" y="244" width="1" height="8" fill="#000"/><rect x="1112" y="244" width="1" height="13" fill="#000"/><rect x="1117" y="244" width="1" height="8" fill="#000"/><rect x="1123" y="244" width="1" height="8" fill="#000"/><rect x="1128" y="244" width="1" height="8" fill="#000"/><rect x="1133" y="244" width="1" height="8" fill="#000"/><rect x="1139" y="244" width="1" height="11" fill="#000"/><rect x="1144" y="244" width="1" height="8" fill="#000"/><rect x="1149" y="244" width="1" height="8" fill="#000"/><rect x="1155" y="244" width="1" height="8" fill="#000"/><rect x="1160" y="244" width="1" height="8" fill="#000"/><rect x="1166" y="244" width="1" height="13" fill="#000"/><rect x="1171" y="244" width="1" height="8" fill="#000"/><rect x="1176" y="244" width="1" height="8" fill="#000"/><rect x="1182" y="244" width="1" height="8" fill="#000"/><rect x="1187" y="244" width="1" height="8" fill="#000"/><rect x="1192" y="244" width="1" height="11" fill="#000"/><rect x="1198" y="244" width="1" height="8" fill="#000"/><rect x="1203" y="244" width="1" height="8" fill="#000"/><rect x="1209" y="244" width="1" height="8" fill="#000"/><rect x="1214" y="244" width="1" height="8" fill="#000"/><rect x="1219" y="244" width="1" height="13" fill="#000"/><rect x="1225" y="244" width="1" height="8" fill="#000"/><rect x="1230" y="244" width="1" height="8" fill="#000"/><rect x="1235" y="244" width="1" height="8" fill="#000"/><rect x="1241" y="244" width="1" height="8" fill="#000"/><rect x="1246" y="244" width="1" height="11" fill="#000"/><rect x="1252" y="244" width="1" height="8" fill="#000"/><rect x="1257" y="244" width="1" height="8" fill="#000"/><rect x="1262" y="244" width="1" height="8" fill="#000"/><rect x="1268" y="244" width="1" height="8" fill="#000"/><rect x="1273" y="244" width="1" height="13" fill="#000"/><rect x="1278" y="244" width="1" height="8" fill="#000"/><rect x="1284" y="244" width="1" height="8" fill="#000"/><rect x="1289" y="244" width="1" height="8" fill="#000"/><rect x="1295" y="244" width="1" height="8" fill="#000"/><rect x="1300" y="244" width="1" height="11" fill="#000"/><rect x="1305" y="244" width="1" height="8" fill="#000"/><rect x="1311" y="244" width="1" height="8" fill="#000"/><rect x="732" y="244" width="5" height="13" fill="#000"/><rect x="733" y="257" width="3" height="15" fill="#000"/><text x="243.7" y="268" font-family="'Liberation Mono', monospace" font-size="11" letter-spacing="0.4" fill="#000" xml:space="preserve">20&#160;Hz</text><text x="340.7" y="268" font-family="'Liberation Mono', monospace" font-size="11" letter-spacing="0.4" fill="#000" xml:space="preserve">40</text><text x="436.7" y="268" font-family="'Liberation Mono', monospace" font-size="11" letter-spacing="0.4" fill="#000" xml:space="preserve">60</text><text x="532.7" y="268" font-family="'Liberation Mono', monospace" font-size="11" letter-spacing="0.4" fill="#000" xml:space="preserve">80</text><text x="626.2" y="268" font-family="'Liberation Mono', monospace" font-size="11" letter-spacing="0.4" fill="#000" xml:space="preserve">100</text><text x="776.7" y="268" font-family="'Liberation Mono', monospace" font-size="11" letter-spacing="0.4" fill="#000" xml:space="preserve">2000&#160;Hz</text><text x="829.7" y="268" font-family="'Liberation Mono', monospace" font-size="11" letter-spacing="0.4" fill="#000" xml:space="preserve">4000</text><text x="883.7" y="268" font-family="'Liberation Mono', monospace" font-size="11" letter-spacing="0.4" fill="#000" xml:space="preserve">6000</text><text x="937.7" y="268" font-family="'Liberation Mono', monospace" font-size="11" letter-spacing="0.4" fill="#000" xml:space="preserve">8000</text><text x="987.2" y="268" font-family="'Liberation Mono', monospace" font-size="11" letter-spacing="0.4" fill="#000" xml:space="preserve">10000</text><text x="1041.2" y="268" font-family="'Liberation Mono', monospace" font-size="11" letter-spacing="0.4" fill="#000" xml:space="preserve">12000</text><text x="1095.2" y="268" font-family="'Liberation Mono', monospace" font-size="11" letter-spacing="0.4" fill="#000" xml:space="preserve">14000</text><text x="1148.2" y="268" font-family="'Liberation Mono', monospace" font-size="11" letter-spacing="0.4" fill="#000" xml:space="preserve">16000</text><text x="1202.2" y="268" font-family="'Liberation Mono', monospace" font-size="11" letter-spacing="0.4" fill="#000" xml:space="preserve">18000</text><text x="1256.2" y="268" font-family="'Liberation Mono', monospace" font-size="11" letter-spacing="0.4" fill="#000" xml:space="preserve">20000</text><rect x="154" y="272" width="1289" height="348" fill="#0010f8"/><rect x="1318" y="272" width="125" height="348" fill="#0000ff"/><rect x="737" y="272" width="1" height="313" fill="#0065ff"/><rect x="738" y="272" width="1" height="314" fill="#00b2ec"/><rect x="739" y="272" width="1" height="314" fill="#0065ff"/><rect x="740" y="272" width="1" height="314" fill="#0060ff"/><rect x="741" y="272" width="1" height="314" fill="#00aff2"/><rect x="742" y="272" width="1" height="314" fill="#0060ff"/><rect x="743" y="272" width="1" height="313" fill="#0049fd"/><rect x="744" y="272" width="1" height="315" fill="#0099ff"/><rect x="745" y="272" width="1" height="314" fill="#0049fd"/><rect x="746" y="272" width="1" height="314" fill="#0024fa"/><rect x="747" y="272" width="1" height="312" fill="#0061ff"/><rect x="748" y="272" width="1" height="313" fill="#0024fa"/><rect x="749" y="272" width="1" height="313" fill="#0041fc"/><rect x="750" y="272" width="1" height="313" fill="#0017f9"/><rect x="751" y="272" width="1" height="312" fill="#0018f9"/><rect x="752" y="272" width="1" height="312" fill="#0042fc"/><rect x="753" y="272" width="1" height="314" fill="#0018f9"/><rect x="754" y="272" width="1" height="312" fill="#001cf9"/><rect x="755" y="272" width="1" height="313" fill="#004efd"/><rect x="756" y="272" width="1" height="313" fill="#0038fc"/><rect x="757" y="272" width="1" height="312" fill="#0082ff"/><rect x="758" y="272" width="1" height="312" fill="#0038fc"/><rect x="759" y="272" width="1" height="313" fill="#002cfa"/><rect x="760" y="272" width="1" height="313" fill="#0070ff"/><rect x="761" y="272" width="1" height="312" fill="#002cfa"/><rect x="762" y="272" width="1" height="314" fill="#0023fa"/><rect x="763" y="272" width="1" height="314" fill="#005eff"/><rect x="764" y="272" width="1" height="314" fill="#002afa"/><rect x="765" y="272" width="1" height="312" fill="#006bff"/><rect x="766" y="272" width="1" height="312" fill="#002afa"/><rect x="767" y="272" width="1" height="312" fill="#0023fa"/><rect x="768" y="272" width="1" height="314" fill="#005fff"/><rect x="769" y="272" width="1" height="312" fill="#0023fa"/><rect x="770" y="272" width="1" height="312" fill="#0023fa"/><rect x="771" y="272" width="1" height="313" fill="#005eff"/><rect x="772" y="272" width="1" height="314" fill="#0023fa"/><rect x="773" y="272" width="1" height="314" fill="#0057fe"/><rect x="774" y="272" width="1" height="312" fill="#001ff9"/><rect x="775" y="272" width="1" height="312" fill="#0031fb"/><rect x="776" y="272" width="1" height="314" fill="#0078ff"/><rect x="777" y="272" width="1" height="313" fill="#0031fb"/><rect x="778" y="272" width="1" height="314" fill="#003efc"/><rect x="779" y="272" width="1" height="312" fill="#008bff"/><rect x="780" y="272" width="1" height="312" fill="#003efc"/><rect x="781" y="272" width="1" height="314" fill="#007cff"/><rect x="782" y="272" width="1" height="313" fill="#0034fb"/><rect x="783" y="272" width="1" height="312" fill="#002afa"/><rect x="784" y="272" width="1" height="314" fill="#006bff"/><rect x="785" y="272" width="1" height="313" fill="#002afa"/><rect x="786" y="272" width="1" height="314" fill="#001ef9"/><rect x="787" y="272" width="1" height="312" fill="#0053fe"/><rect x="788" y="272" width="1" height="314" fill="#001ef9"/><rect x="789" y="272" width="1" height="312" fill="#001ff9"/><rect x="790" y="272" width="1" height="314" fill="#0055fe"/><rect x="791" y="272" width="1" height="313" fill="#003dfc"/><rect x="792" y="272" width="1" height="313" fill="#0089ff"/><rect x="793" y="272" width="1" height="313" fill="#003dfc"/><rect x="794" y="272" width="1" height="314" fill="#0043fc"/><rect x="795" y="272" width="1" height="312" fill="#0091ff"/><rect x="796" y="272" width="1" height="312" fill="#0043fc"/><rect x="797" y="272" width="1" height="313" fill="#0059fe"/><rect x="798" y="272" width="1" height="314" fill="#00aafb"/><rect x="799" y="272" width="1" height="312" fill="#0087ff"/><rect x="800" y="272" width="1" height="314" fill="#00c6c5"/><rect x="801" y="272" width="1" height="312" fill="#0087ff"/><rect x="802" y="272" width="1" height="314" fill="#0092ff"/><rect x="803" y="272" width="1" height="314" fill="#00cfb2"/><rect x="804" y="272" width="1" height="314" fill="#0092ff"/><rect x="805" y="272" width="1" height="314" fill="#0084ff"/><rect x="806" y="272" width="1" height="314" fill="#00c4c8"/><rect x="807" y="272" width="1" height="313" fill="#0084ff"/><rect x="808" y="272" width="1" height="314" fill="#00badb"/><rect x="809" y="272" width="1" height="313" fill="#0073ff"/><rect x="810" y="272" width="1" height="312" fill="#0053fe"/><rect x="811" y="272" width="1" height="314" fill="#00a4ff"/><rect x="812" y="272" width="1" height="312" fill="#0053fe"/><rect x="813" y="272" width="1" height="314" fill="#0068ff"/><rect x="814" y="272" width="1" height="315" fill="#00b3e8"/><rect x="815" y="272" width="1" height="312" fill="#0068ff"/><rect x="816" y="272" width="1" height="315" fill="#00b0ee"/><rect x="817" y="272" width="1" height="314" fill="#0063ff"/><rect x="818" y="272" width="1" height="312" fill="#0059fe"/><rect x="819" y="272" width="1" height="316" fill="#00aafb"/><rect x="820" y="272" width="1" height="313" fill="#0059fe"/><rect x="821" y="272" width="1" height="313" fill="#0055fe"/><rect x="822" y="272" width="1" height="316" fill="#00a7ff"/><rect x="823" y="272" width="1" height="313" fill="#005fff"/><rect x="824" y="272" width="1" height="315" fill="#00aef4"/><rect x="825" y="272" width="1" height="314" fill="#005fff"/><rect x="826" y="272" width="1" height="314" fill="#0054fe"/><rect x="827" y="272" width="1" height="315" fill="#00a5ff"/><rect x="828" y="272" width="1" height="314" fill="#0054fe"/><rect x="829" y="272" width="1" height="314" fill="#0048fd"/><rect x="830" y="272" width="1" height="315" fill="#0097ff"/><rect x="831" y="272" width="1" height="313" fill="#0048fd"/><rect x="832" y="272" width="1" height="313" fill="#005eff"/><rect x="833" y="272" width="1" height="314" fill="#00adf5"/><rect x="834" y="272" width="1" height="312" fill="#0064ff"/><rect x="835" y="272" width="1" height="314" fill="#00b1ec"/><rect x="836" y="272" width="1" height="314" fill="#0064ff"/><rect x="837" y="272" width="1" height="312" fill="#0043fc"/><rect x="838" y="272" width="1" height="312" fill="#0091ff"/><rect x="839" y="272" width="1" height="312" fill="#0043fc"/><rect x="840" y="272" width="1" height="314" fill="#0023fa"/><rect x="841" y="272" width="1" height="314" fill="#005fff"/><rect x="842" y="272" width="1" height="314" fill="#002bfa"/><rect x="843" y="272" width="1" height="312" fill="#006dff"/><rect x="844" y="272" width="1" height="312" fill="#002bfa"/><rect x="845" y="272" width="1" height="312" fill="#0041fc"/><rect x="846" y="272" width="1" height="313" fill="#008eff"/><rect x="847" y="272" width="1" height="312" fill="#0041fc"/><rect x="848" y="272" width="1" height="313" fill="#0064ff"/><rect x="849" y="272" width="1" height="314" fill="#00b1ed"/><rect x="850" y="272" width="1" height="314" fill="#0065ff"/><rect x="851" y="272" width="1" height="316" fill="#00b2eb"/><rect x="852" y="272" width="1" height="313" fill="#0065ff"/><rect x="853" y="272" width="1" height="312" fill="#004cfd"/><rect x="854" y="272" width="1" height="316" fill="#009cff"/><rect x="855" y="272" width="1" height="312" fill="#004cfd"/><rect x="856" y="272" width="1" height="313" fill="#004ffe"/><rect x="857" y="272" width="1" height="314" fill="#00a0ff"/><rect x="858" y="272" width="1" height="313" fill="#004ffe"/><rect x="859" y="272" width="1" height="315" fill="#009aff"/><rect x="860" y="272" width="1" height="313" fill="#004afd"/><rect x="861" y="272" width="1" height="312" fill="#0038fb"/><rect x="862" y="272" width="1" height="313" fill="#0082ff"/><rect x="863" y="272" width="1" height="312" fill="#0038fb"/><rect x="864" y="272" width="1" height="312" fill="#0038fb"/><rect x="865" y="272" width="1" height="312" fill="#0082ff"/><rect x="866" y="272" width="1" height="313" fill="#0042fc"/><rect x="867" y="272" width="1" height="312" fill="#0090ff"/><rect x="868" y="272" width="1" height="312" fill="#0042fc"/><rect x="870" y="272" width="1" height="312" fill="#0033fb"/><rect x="872" y="272" width="1" height="312" fill="#0016f9"/><rect x="873" y="272" width="1" height="313" fill="#003cfc"/><rect x="874" y="272" width="1" height="313" fill="#004bfd"/><rect x="875" y="272" width="1" height="316" fill="#009bff"/><rect x="876" y="272" width="1" height="313" fill="#004bfd"/><rect x="877" y="272" width="1" height="314" fill="#0048fd"/><rect x="878" y="272" width="1" height="316" fill="#0097ff"/><rect x="879" y="272" width="1" height="313" fill="#0048fd"/><rect x="880" y="272" width="1" height="312" fill="#0054fe"/><rect x="881" y="272" width="1" height="316" fill="#00a5ff"/><rect x="882" y="272" width="1" height="312" fill="#0054fe"/><rect x="883" y="272" width="1" height="314" fill="#006dff"/><rect x="884" y="272" width="1" height="315" fill="#00b7e2"/><rect x="885" y="272" width="1" height="312" fill="#006dff"/><rect x="886" y="272" width="1" height="316" fill="#00adf5"/><rect x="887" y="272" width="1" height="314" fill="#005eff"/><rect x="888" y="272" width="1" height="313" fill="#0058fe"/><rect x="889" y="272" width="1" height="316" fill="#00a9fc"/><rect x="890" y="272" width="1" height="314" fill="#0058fe"/><rect x="891" y="272" width="1" height="312" fill="#0047fd"/><rect x="892" y="272" width="1" height="315" fill="#0096ff"/><rect x="893" y="272" width="1" height="313" fill="#0047fd"/><rect x="894" y="272" width="1" height="314" fill="#004afd"/><rect x="895" y="272" width="1" height="314" fill="#001af9"/><rect x="897" y="272" width="1" height="314" fill="#0023fa"/><rect x="899" y="272" width="1" height="313" fill="#0018f9"/><rect x="900" y="272" width="1" height="314" fill="#0044fd"/><rect x="901" y="272" width="1" height="314" fill="#002bfa"/><rect x="902" y="272" width="1" height="314" fill="#006eff"/><rect x="903" y="272" width="1" height="312" fill="#002bfa"/><rect x="904" y="272" width="1" height="312" fill="#002ffb"/><rect x="905" y="272" width="1" height="312" fill="#0075ff"/><rect x="906" y="272" width="1" height="313" fill="#002ffb"/><rect x="907" y="272" width="1" height="312" fill="#002cfa"/><rect x="908" y="272" width="1" height="314" fill="#0070ff"/><rect x="909" y="272" width="1" height="313" fill="#002cfa"/><rect x="910" y="272" width="1" height="313" fill="#006aff"/><rect x="911" y="272" width="1" height="313" fill="#0029fa"/><rect x="912" y="272" width="1" height="314" fill="#0031fb"/><rect x="913" y="272" width="1" height="313" fill="#0078ff"/><rect x="914" y="272" width="1" height="312" fill="#0031fb"/><rect x="915" y="272" width="1" height="314" fill="#0030fb"/><rect x="916" y="272" width="1" height="314" fill="#0076ff"/><rect x="917" y="272" width="1" height="313" fill="#0034fb"/><rect x="918" y="272" width="1" height="313" fill="#007cff"/><rect x="919" y="272" width="1" height="313" fill="#0034fb"/><rect x="920" y="272" width="1" height="312" fill="#0028fa"/><rect x="921" y="272" width="1" height="314" fill="#0068ff"/><rect x="922" y="272" width="1" height="312" fill="#0028fa"/><rect x="923" y="272" width="1" height="312" fill="#0024fa"/><rect x="924" y="272" width="1" height="312" fill="#0060ff"/><rect x="925" y="272" width="1" height="314" fill="#0024fa"/><rect x="926" y="272" width="1" height="312" fill="#0029fa"/><rect x="927" y="272" width="1" height="314" fill="#006aff"/><rect x="928" y="272" width="1" height="314" fill="#0029fa"/><rect x="929" y="272" width="1" height="313" fill="#0062ff"/><rect x="930" y="272" width="1" height="313" fill="#0025fa"/><rect x="931" y="272" width="1" height="313" fill="#001ff9"/><rect x="932" y="272" width="1" height="314" fill="#0055fe"/><rect x="933" y="272" width="1" height="314" fill="#001ff9"/><rect x="934" y="272" width="1" height="313" fill="#001ff9"/><rect x="935" y="272" width="1" height="313" fill="#0055fe"/><rect x="936" y="272" width="1" height="312" fill="#001ff9"/><rect x="937" y="272" width="1" height="312" fill="#0053fe"/><rect x="938" y="272" width="1" height="312" fill="#001ef9"/><rect x="939" y="272" width="1" height="314" fill="#0017f9"/><rect x="940" y="272" width="1" height="312" fill="#003efc"/><rect x="941" y="272" width="1" height="313" fill="#0017f9"/><rect x="942" y="272" width="1" height="312" fill="#0017f9"/><rect x="943" y="272" width="1" height="312" fill="#0040fc"/><rect x="944" y="272" width="1" height="312" fill="#0017f9"/><rect x="945" y="272" width="1" height="314" fill="#003dfc"/><rect x="946" y="272" width="1" height="314" fill="#0016f9"/><rect x="948" y="272" width="1" height="314" fill="#0036fb"/><rect x="951" y="272" width="1" height="312" fill="#002cfa"/><rect x="800" y="280.7" width="150" height="5" fill="#0010f8" fill-opacity="0.22" shape-rendering="auto"/><rect x="738" y="277.2" width="1.4" height="7" fill="#70b000" fill-opacity="0.7" shape-rendering="auto"/><rect x="800" y="305.9" width="150" height="5" fill="#0010f8" fill-opacity="0.22" shape-rendering="auto"/><rect x="738" y="302.4" width="1.4" height="7" fill="#70b000" fill-opacity="0.7" shape-rendering="auto"/><rect x="800" y="331.0" width="150" height="5" fill="#0010f8" fill-opacity="0.22" shape-rendering="auto"/><rect x="738" y="327.5" width="1.4" height="7" fill="#70b000" fill-opacity="0.7" shape-rendering="auto"/><rect x="800" y="356.2" width="150" height="5" fill="#0010f8" fill-opacity="0.22" shape-rendering="auto"/><rect x="738" y="352.7" width="1.4" height="7" fill="#70b000" fill-opacity="0.7" shape-rendering="auto"/><rect x="800" y="381.4" width="150" height="5" fill="#0010f8" fill-opacity="0.22" shape-rendering="auto"/><rect x="738" y="377.9" width="1.4" height="7" fill="#70b000" fill-opacity="0.7" shape-rendering="auto"/><rect x="800" y="406.6" width="150" height="5" fill="#0010f8" fill-opacity="0.22" shape-rendering="auto"/><rect x="738" y="403.1" width="1.4" height="7" fill="#70b000" fill-opacity="0.7" shape-rendering="auto"/><rect x="800" y="431.7" width="150" height="5" fill="#0010f8" fill-opacity="0.22" shape-rendering="auto"/><rect x="738" y="428.2" width="1.4" height="7" fill="#70b000" fill-opacity="0.7" shape-rendering="auto"/><rect x="800" y="456.9" width="150" height="5" fill="#0010f8" fill-opacity="0.22" shape-rendering="auto"/><rect x="738" y="453.4" width="1.4" height="7" fill="#70b000" fill-opacity="0.7" shape-rendering="auto"/><rect x="800" y="482.1" width="150" height="5" fill="#0010f8" fill-opacity="0.22" shape-rendering="auto"/><rect x="738" y="478.6" width="1.4" height="7" fill="#70b000" fill-opacity="0.7" shape-rendering="auto"/><rect x="800" y="507.2" width="150" height="5" fill="#0010f8" fill-opacity="0.22" shape-rendering="auto"/><rect x="738" y="503.7" width="1.4" height="7" fill="#70b000" fill-opacity="0.7" shape-rendering="auto"/><rect x="800" y="532.4" width="150" height="5" fill="#0010f8" fill-opacity="0.22" shape-rendering="auto"/><rect x="738" y="528.9" width="1.4" height="7" fill="#70b000" fill-opacity="0.7" shape-rendering="auto"/><rect x="800" y="557.6" width="150" height="5" fill="#0010f8" fill-opacity="0.22" shape-rendering="auto"/><rect x="738" y="554.1" width="1.4" height="7" fill="#70b000" fill-opacity="0.7" shape-rendering="auto"/><rect x="800" y="582.7" width="150" height="5" fill="#0010f8" fill-opacity="0.22" shape-rendering="auto"/><rect x="738" y="579.2" width="1.4" height="7" fill="#70b000" fill-opacity="0.7" shape-rendering="auto"/><rect x="1022" y="272" width="1" height="312" fill="#0030fa"/><rect x="1025" y="272" width="1" height="312" fill="#0030fa"/><rect x="1027" y="272" width="1" height="312" fill="#0030fa"/><rect x="1030" y="272" width="1" height="312" fill="#0030fa"/><defs><linearGradient id="fade" x1="0" y1="0" x2="0" y2="1"><stop offset="0" stop-color="#0010f8" stop-opacity="0"/><stop offset="1" stop-color="#0010f8" stop-opacity="1"/></linearGradient></defs><rect x="737" y="572" width="300" height="17" fill="url(#fade)" shape-rendering="auto"/><circle cx="742.5" cy="477" r="1.6" fill="#20d8a0" shape-rendering="auto"/><circle cx="742.5" cy="563" r="1.6" fill="#20d8a0" shape-rendering="auto"/><defs><filter id="bl" x="-20%" y="-5%" width="140%" height="110%"><feGaussianBlur stdDeviation="1"/></filter></defs><clipPath id="wf1"><rect x="154" y="272" width="579" height="348"/></clipPath><g clip-path="url(#wf1)"><g shape-rendering="auto" filter="url(#bl)"><path d="M421.5 266.9 L424.5 273.4 L427.5 266.4" stroke="#00a0ff" stroke-width="2" fill="none"/><rect x="669" y="288.0" width="2" height="4" fill="#0048ff"/><rect x="669" y="313.2" width="2" height="4" fill="#0048ff"/><rect x="669" y="338.3" width="2" height="4" fill="#0048ff"/><rect x="669" y="363.5" width="2" height="4" fill="#0048ff"/><rect x="669" y="388.7" width="2" height="4" fill="#0048ff"/><rect x="669" y="413.9" width="2" height="4" fill="#0048ff"/><rect x="669" y="439.0" width="2" height="4" fill="#0048ff"/><rect x="669" y="464.2" width="2" height="4" fill="#0048ff"/><rect x="669" y="489.4" width="2" height="4" fill="#0048ff"/><rect x="669" y="514.5" width="2" height="4" fill="#0048ff"/><rect x="669" y="539.7" width="2" height="4" fill="#0048ff"/><rect x="669" y="564.9" width="2" height="4" fill="#0048ff"/><rect x="669" y="590.0" width="2" height="4" fill="#0048ff"/><ellipse cx="405.5" cy="287.9" rx="6.5" ry="2.4" fill="#0090ff" transform="rotate(-14 405.5 287.9)"/><path d="M411 285.6 L414.5 280.6" stroke="#0070ff" stroke-width="1.5" fill="none"/><ellipse cx="447" cy="282.2" rx="4.5" ry="1.5" fill="#0098ff" transform="rotate(-12 447 282.2)"/><path d="M421.5 292.1 L424.5 298.6 L427.5 291.6" stroke="#00a0ff" stroke-width="2" fill="none"/><rect x="413.5" y="275.4" width="9" height="7.4" rx="1.5" fill="#00c8c0"/><ellipse cx="432.5" cy="281.6" rx="11.5" ry="4.9" fill="#00c8c0"/><rect x="414.3" y="276.2" width="7.4" height="5.6" rx="1" fill="#00f010"/><path d="M420 278.1 L427 280.1" stroke="#00e040" stroke-width="3.4" fill="none"/><ellipse cx="432.5" cy="281.6" rx="10" ry="3.8" fill="#00f010"/><ellipse cx="434.8" cy="281.8" rx="3.6" ry="1.9" fill="#709800"/><ellipse cx="405.5" cy="313.1" rx="6.5" ry="2.4" fill="#0090ff" transform="rotate(-14 405.5 313.1)"/><path d="M411 310.8 L414.5 305.8" stroke="#0070ff" stroke-width="1.5" fill="none"/><ellipse cx="447" cy="307.4" rx="4.5" ry="1.5" fill="#0098ff" transform="rotate(-12 447 307.4)"/><path d="M421.5 317.3 L424.5 323.8 L427.5 316.8" stroke="#00a0ff" stroke-width="2" fill="none"/><rect x="413.5" y="300.6" width="9" height="7.4" rx="1.5" fill="#00c8c0"/><ellipse cx="432.5" cy="306.8" rx="11.5" ry="4.9" fill="#00c8c0"/><rect x="414.3" y="301.4" width="7.4" height="5.6" rx="1" fill="#00f010"/><path d="M420 303.3 L427 305.3" stroke="#00e040" stroke-width="3.4" fill="none"/><ellipse cx="432.5" cy="306.8" rx="10" ry="3.8" fill="#00f010"/><ellipse cx="434.8" cy="307.0" rx="3.6" ry="1.9" fill="#709800"/><ellipse cx="405.5" cy="338.2" rx="6.5" ry="2.4" fill="#0090ff" transform="rotate(-14 405.5 338.2)"/><path d="M411 335.9 L414.5 330.9" stroke="#0070ff" stroke-width="1.5" fill="none"/><ellipse cx="447" cy="332.5" rx="4.5" ry="1.5" fill="#0098ff" transform="rotate(-12 447 332.5)"/><path d="M421.5 342.4 L424.5 348.9 L427.5 341.9" stroke="#00a0ff" stroke-width="2" fill="none"/><rect x="413.5" y="325.7" width="9" height="7.4" rx="1.5" fill="#00c8c0"/><ellipse cx="432.5" cy="331.9" rx="11.5" ry="4.9" fill="#00c8c0"/><rect x="414.3" y="326.5" width="7.4" height="5.6" rx="1" fill="#00f010"/><path d="M420 328.4 L427 330.4" stroke="#00e040" stroke-width="3.4" fill="none"/><ellipse cx="432.5" cy="331.9" rx="10" ry="3.8" fill="#00f010"/><ellipse cx="434.8" cy="332.1" rx="3.6" ry="1.9" fill="#709800"/><ellipse cx="405.5" cy="363.4" rx="6.5" ry="2.4" fill="#0090ff" transform="rotate(-14 405.5 363.4)"/><path d="M411 361.1 L414.5 356.1" stroke="#0070ff" stroke-width="1.5" fill="none"/><ellipse cx="447" cy="357.7" rx="4.5" ry="1.5" fill="#0098ff" transform="rotate(-12 447 357.7)"/><path d="M421.5 367.6 L424.5 374.1 L427.5 367.1" stroke="#00a0ff" stroke-width="2" fill="none"/><rect x="413.5" y="350.9" width="9" height="7.4" rx="1.5" fill="#00c8c0"/><ellipse cx="432.5" cy="357.1" rx="11.5" ry="4.9" fill="#00c8c0"/><rect x="414.3" y="351.7" width="7.4" height="5.6" rx="1" fill="#00f010"/><path d="M420 353.6 L427 355.6" stroke="#00e040" stroke-width="3.4" fill="none"/><ellipse cx="432.5" cy="357.1" rx="10" ry="3.8" fill="#00f010"/><ellipse cx="434.8" cy="357.3" rx="3.6" ry="1.9" fill="#709800"/><ellipse cx="405.5" cy="388.6" rx="6.5" ry="2.4" fill="#0090ff" transform="rotate(-14 405.5 388.6)"/><path d="M411 386.3 L414.5 381.3" stroke="#0070ff" stroke-width="1.5" fill="none"/><ellipse cx="447" cy="382.9" rx="4.5" ry="1.5" fill="#0098ff" transform="rotate(-12 447 382.9)"/><path d="M421.5 392.8 L424.5 399.3 L427.5 392.3" stroke="#00a0ff" stroke-width="2" fill="none"/><rect x="413.5" y="376.1" width="9" height="7.4" rx="1.5" fill="#00c8c0"/><ellipse cx="432.5" cy="382.3" rx="11.5" ry="4.9" fill="#00c8c0"/><rect x="414.3" y="376.9" width="7.4" height="5.6" rx="1" fill="#00f010"/><path d="M420 378.8 L427 380.8" stroke="#00e040" stroke-width="3.4" fill="none"/><ellipse cx="432.5" cy="382.3" rx="10" ry="3.8" fill="#00f010"/><ellipse cx="434.8" cy="382.5" rx="3.6" ry="1.9" fill="#709800"/><ellipse cx="405.5" cy="413.8" rx="6.5" ry="2.4" fill="#0090ff" transform="rotate(-14 405.5 413.8)"/><path d="M411 411.5 L414.5 406.5" stroke="#0070ff" stroke-width="1.5" fill="none"/><ellipse cx="447" cy="408.1" rx="4.5" ry="1.5" fill="#0098ff" transform="rotate(-12 447 408.1)"/><path d="M421.5 418.0 L424.5 424.5 L427.5 417.5" stroke="#00a0ff" stroke-width="2" fill="none"/><rect x="413.5" y="401.3" width="9" height="7.4" rx="1.5" fill="#00c8c0"/><ellipse cx="432.5" cy="407.5" rx="11.5" ry="4.9" fill="#00c8c0"/><rect x="414.3" y="402.1" width="7.4" height="5.6" rx="1" fill="#00f010"/><path d="M420 404.0 L427 406.0" stroke="#00e040" stroke-width="3.4" fill="none"/><ellipse cx="432.5" cy="407.5" rx="10" ry="3.8" fill="#00f010"/><ellipse cx="434.8" cy="407.7" rx="3.6" ry="1.9" fill="#709800"/><ellipse cx="405.5" cy="438.9" rx="6.5" ry="2.4" fill="#0090ff" transform="rotate(-14 405.5 438.9)"/><path d="M411 436.6 L414.5 431.6" stroke="#0070ff" stroke-width="1.5" fill="none"/><ellipse cx="447" cy="433.2" rx="4.5" ry="1.5" fill="#0098ff" transform="rotate(-12 447 433.2)"/><path d="M421.5 443.1 L424.5 449.6 L427.5 442.6" stroke="#00a0ff" stroke-width="2" fill="none"/><rect x="413.5" y="426.4" width="9" height="7.4" rx="1.5" fill="#00c8c0"/><ellipse cx="432.5" cy="432.6" rx="11.5" ry="4.9" fill="#00c8c0"/><rect x="414.3" y="427.2" width="7.4" height="5.6" rx="1" fill="#00f010"/><path d="M420 429.1 L427 431.1" stroke="#00e040" stroke-width="3.4" fill="none"/><ellipse cx="432.5" cy="432.6" rx="10" ry="3.8" fill="#00f010"/><ellipse cx="434.8" cy="432.8" rx="3.6" ry="1.9" fill="#709800"/><ellipse cx="405.5" cy="464.1" rx="6.5" ry="2.4" fill="#0090ff" transform="rotate(-14 405.5 464.1)"/><path d="M411 461.8 L414.5 456.8" stroke="#0070ff" stroke-width="1.5" fill="none"/><ellipse cx="447" cy="458.4" rx="4.5" ry="1.5" fill="#0098ff" transform="rotate(-12 447 458.4)"/><path d="M421.5 468.3 L424.5 474.8 L427.5 467.8" stroke="#00a0ff" stroke-width="2" fill="none"/><rect x="413.5" y="451.6" width="9" height="7.4" rx="1.5" fill="#00c8c0"/><ellipse cx="432.5" cy="457.8" rx="11.5" ry="4.9" fill="#00c8c0"/><rect x="414.3" y="452.4" width="7.4" height="5.6" rx="1" fill="#00f010"/><path d="M420 454.3 L427 456.3" stroke="#00e040" stroke-width="3.4" fill="none"/><ellipse cx="432.5" cy="457.8" rx="10" ry="3.8" fill="#00f010"/><ellipse cx="434.8" cy="458.0" rx="3.6" ry="1.9" fill="#709800"/><ellipse cx="405.5" cy="489.3" rx="6.5" ry="2.4" fill="#0090ff" transform="rotate(-14 405.5 489.3)"/><path d="M411 487.0 L414.5 482.0" stroke="#0070ff" stroke-width="1.5" fill="none"/><ellipse cx="447" cy="483.6" rx="4.5" ry="1.5" fill="#0098ff" transform="rotate(-12 447 483.6)"/><path d="M421.5 493.5 L424.5 500.0 L427.5 493.0" stroke="#00a0ff" stroke-width="2" fill="none"/><rect x="413.5" y="476.8" width="9" height="7.4" rx="1.5" fill="#00c8c0"/><ellipse cx="432.5" cy="483.0" rx="11.5" ry="4.9" fill="#00c8c0"/><rect x="414.3" y="477.6" width="7.4" height="5.6" rx="1" fill="#00f010"/><path d="M420 479.5 L427 481.5" stroke="#00e040" stroke-width="3.4" fill="none"/><ellipse cx="432.5" cy="483.0" rx="10" ry="3.8" fill="#00f010"/><ellipse cx="434.8" cy="483.2" rx="3.6" ry="1.9" fill="#709800"/><ellipse cx="405.5" cy="514.4" rx="6.5" ry="2.4" fill="#0090ff" transform="rotate(-14 405.5 514.4)"/><path d="M411 512.1 L414.5 507.1" stroke="#0070ff" stroke-width="1.5" fill="none"/><ellipse cx="447" cy="508.7" rx="4.5" ry="1.5" fill="#0098ff" transform="rotate(-12 447 508.7)"/><path d="M421.5 518.6 L424.5 525.1 L427.5 518.1" stroke="#00a0ff" stroke-width="2" fill="none"/><rect x="413.5" y="501.9" width="9" height="7.4" rx="1.5" fill="#00c8c0"/><ellipse cx="432.5" cy="508.1" rx="11.5" ry="4.9" fill="#00c8c0"/><rect x="414.3" y="502.7" width="7.4" height="5.6" rx="1" fill="#00f010"/><path d="M420 504.6 L427 506.6" stroke="#00e040" stroke-width="3.4" fill="none"/><ellipse cx="432.5" cy="508.1" rx="10" ry="3.8" fill="#00f010"/><ellipse cx="434.8" cy="508.3" rx="3.6" ry="1.9" fill="#709800"/><ellipse cx="405.5" cy="539.6" rx="6.5" ry="2.4" fill="#0090ff" transform="rotate(-14 405.5 539.6)"/><path d="M411 537.3 L414.5 532.3" stroke="#0070ff" stroke-width="1.5" fill="none"/><ellipse cx="447" cy="533.9" rx="4.5" ry="1.5" fill="#0098ff" transform="rotate(-12 447 533.9)"/><path d="M421.5 543.8 L424.5 550.3 L427.5 543.3" stroke="#00a0ff" stroke-width="2" fill="none"/><rect x="413.5" y="527.1" width="9" height="7.4" rx="1.5" fill="#00c8c0"/><ellipse cx="432.5" cy="533.3" rx="11.5" ry="4.9" fill="#00c8c0"/><rect x="414.3" y="527.9" width="7.4" height="5.6" rx="1" fill="#00f010"/><path d="M420 529.8 L427 531.8" stroke="#00e040" stroke-width="3.4" fill="none"/><ellipse cx="432.5" cy="533.3" rx="10" ry="3.8" fill="#00f010"/><ellipse cx="434.8" cy="533.5" rx="3.6" ry="1.9" fill="#709800"/><ellipse cx="405.5" cy="564.8" rx="6.5" ry="2.4" fill="#0090ff" transform="rotate(-14 405.5 564.8)"/><path d="M411 562.5 L414.5 557.5" stroke="#0070ff" stroke-width="1.5" fill="none"/><ellipse cx="447" cy="559.1" rx="4.5" ry="1.5" fill="#0098ff" transform="rotate(-12 447 559.1)"/><path d="M421.5 569.0 L424.5 575.5 L427.5 568.5" stroke="#00a0ff" stroke-width="2" fill="none"/><rect x="413.5" y="552.3" width="9" height="7.4" rx="1.5" fill="#00c8c0"/><ellipse cx="432.5" cy="558.5" rx="11.5" ry="4.9" fill="#00c8c0"/><rect x="414.3" y="553.1" width="7.4" height="5.6" rx="1" fill="#00f010"/><path d="M420 555.0 L427 557.0" stroke="#00e040" stroke-width="3.4" fill="none"/><ellipse cx="432.5" cy="558.5" rx="10" ry="3.8" fill="#00f010"/><ellipse cx="434.8" cy="558.7" rx="3.6" ry="1.9" fill="#709800"/><rect x="413.5" y="577.4" width="9" height="7.4" rx="1.5" fill="#00c8c0"/><ellipse cx="432.5" cy="583.6" rx="11.5" ry="4.9" fill="#00c8c0"/><rect x="414.3" y="578.2" width="7.4" height="5.6" rx="1" fill="#00f010"/><path d="M420 580.1 L427 582.1" stroke="#00e040" stroke-width="3.4" fill="none"/><ellipse cx="432.5" cy="583.6" rx="10" ry="3.8" fill="#00f010"/><ellipse cx="434.8" cy="583.8" rx="3" ry="1.5" fill="#40d000"/></g></g><path d="M202.5 272 V316" stroke="#fff" stroke-width="1" stroke-dasharray="3 3"/><path d="M202.5 317 V337" stroke="#fff" stroke-width="1" stroke-dasharray="0 3 3 1 5 2 4 2"/><path d="M202.5 337 V396" stroke="#fff" stroke-width="1" stroke-dasharray="8 2 3 1.3"/><path d="M202.5 396 V620" stroke="#fff" stroke-width="1" stroke-dasharray="2 2"/><path d="M250.5 272 V316" stroke="#fff" stroke-width="1" stroke-dasharray="3 3"/><path d="M250.5 317 V337" stroke="#fff" stroke-width="1" stroke-dasharray="0 3 3 1 5 2 4 2"/><path d="M250.5 337 V396" stroke="#fff" stroke-width="1" stroke-dasharray="8 2 3 1.3"/><path d="M250.5 396 V620" stroke="#fff" stroke-width="1" stroke-dasharray="2 2"/><path d="M299.5 272 V316" stroke="#fff" stroke-width="1" stroke-dasharray="3 3"/><path d="M299.5 317 V337" stroke="#fff" stroke-width="1" stroke-dasharray="0 3 3 1 5 2 4 2"/><path d="M299.5 337 V396" stroke="#fff" stroke-width="1" stroke-dasharray="8 2 3 1.3"/><path d="M299.5 396 V620" stroke="#fff" stroke-width="1" stroke-dasharray="2 2"/><path d="M347.5 272 V316" stroke="#fff" stroke-width="1" stroke-dasharray="3 3"/><path d="M347.5 317 V337" stroke="#fff" stroke-width="1" stroke-dasharray="0 3 3 1 5 2 4 2"/><path d="M347.5 337 V396" stroke="#fff" stroke-width="1" stroke-dasharray="8 2 3 1.3"/><path d="M347.5 396 V620" stroke="#fff" stroke-width="1" stroke-dasharray="2 2"/><path d="M395.5 272 V316" stroke="#fff" stroke-width="1" stroke-dasharray="3 3"/><path d="M395.5 317 V337" stroke="#fff" stroke-width="1" stroke-dasharray="0 3 3 1 5 2 4 2"/><path d="M395.5 337 V396" stroke="#fff" stroke-width="1" stroke-dasharray="8 2 3 1.3"/><path d="M395.5 396 V620" stroke="#fff" stroke-width="1" stroke-dasharray="2 2"/><path d="M443.5 272 V316" stroke="#fff" stroke-width="1" stroke-dasharray="3 3"/><path d="M443.5 317 V337" stroke="#fff" stroke-width="1" stroke-dasharray="0 3 3 1 5 2 4 2"/><path d="M443.5 337 V396" stroke="#fff" stroke-width="1" stroke-dasharray="8 2 3 1.3"/><path d="M443.5 396 V620" stroke="#fff" stroke-width="1" stroke-dasharray="2 2"/><path d="M491.5 272 V316" stroke="#fff" stroke-width="1" stroke-dasharray="3 3"/><path d="M491.5 317 V337" stroke="#fff" stroke-width="1" stroke-dasharray="0 3 3 1 5 2 4 2"/><path d="M491.5 337 V396" stroke="#fff" stroke-width="1" stroke-dasharray="8 2 3 1.3"/><path d="M491.5 396 V620" stroke="#fff" stroke-width="1" stroke-dasharray="2 2"/><path d="M539.5 272 V316" stroke="#fff" stroke-width="1" stroke-dasharray="3 3"/><path d="M539.5 317 V337" stroke="#fff" stroke-width="1" stroke-dasharray="0 3 3 1 5 2 4 2"/><path d="M539.5 337 V396" stroke="#fff" stroke-width="1" stroke-dasharray="8 2 3 1.3"/><path d="M539.5 396 V620" stroke="#fff" stroke-width="1" stroke-dasharray="2 2"/><path d="M588.5 272 V316" stroke="#fff" stroke-width="1" stroke-dasharray="3 3"/><path d="M588.5 317 V337" stroke="#fff" stroke-width="1" stroke-dasharray="0 3 3 1 5 2 4 2"/><path d="M588.5 337 V396" stroke="#fff" stroke-width="1" stroke-dasharray="8 2 3 1.3"/><path d="M588.5 396 V620" stroke="#fff" stroke-width="1" stroke-dasharray="2 2"/><path d="M636.5 272 V316" stroke="#fff" stroke-width="1" stroke-dasharray="3 3"/><path d="M636.5 317 V337" stroke="#fff" stroke-width="1" stroke-dasharray="0 3 3 1 5 2 4 2"/><path d="M636.5 337 V396" stroke="#fff" stroke-width="1" stroke-dasharray="8 2 3 1.3"/><path d="M636.5 396 V620" stroke="#fff" stroke-width="1" stroke-dasharray="2 2"/><path d="M684.5 272 V316" stroke="#fff" stroke-width="1" stroke-dasharray="3 3"/><path d="M684.5 317 V337" stroke="#fff" stroke-width="1" stroke-dasharray="0 3 3 1 5 2 4 2"/><path d="M684.5 337 V396" stroke="#fff" stroke-width="1" stroke-dasharray="8 2 3 1.3"/><path d="M684.5 396 V620" stroke="#fff" stroke-width="1" stroke-dasharray="2 2"/><path d="M763.5 272 V316" stroke="#fff" stroke-width="1" stroke-dasharray="3 3"/><path d="M763.5 317 V396" stroke="#fff" stroke-width="1" stroke-dasharray="3 1.5 6 1.3" stroke-dashoffset="8.2"/><path d="M763.5 396 V620" stroke="#fff" stroke-width="1" stroke-dasharray="2 2"/><path d="M790.5 272 V316" stroke="#fff" stroke-width="1" stroke-dasharray="3 3"/><path d="M790.5 317 V396" stroke="#fff" stroke-width="1" stroke-dasharray="3 1.5 6 1.3" stroke-dashoffset="8.2"/><path d="M790.5 396 V620" stroke="#fff" stroke-width="1" stroke-dasharray="2 2"/><path d="M817.5 272 V316" stroke="#fff" stroke-width="1" stroke-dasharray="3 3"/><path d="M817.5 317 V396" stroke="#fff" stroke-width="1" stroke-dasharray="3 1.5 6 1.3" stroke-dashoffset="8.2"/><path d="M817.5 396 V620" stroke="#fff" stroke-width="1" stroke-dasharray="2 2"/><path d="M843.5 272 V316" stroke="#fff" stroke-width="1" stroke-dasharray="3 3"/><path d="M843.5 317 V396" stroke="#fff" stroke-width="1" stroke-dasharray="3 1.5 6 1.3" stroke-dashoffset="8.2"/><path d="M843.5 396 V620" stroke="#fff" stroke-width="1" stroke-dasharray="2 2"/><path d="M870.5 272 V316" stroke="#fff" stroke-width="1" stroke-dasharray="3 3"/><path d="M870.5 317 V396" stroke="#fff" stroke-width="1" stroke-dasharray="3 1.5 6 1.3" stroke-dashoffset="8.2"/><path d="M870.5 396 V620" stroke="#fff" stroke-width="1" stroke-dasharray="2 2"/><path d="M897.5 272 V316" stroke="#fff" stroke-width="1" stroke-dasharray="3 3"/><path d="M897.5 317 V396" stroke="#fff" stroke-width="1" stroke-dasharray="3 1.5 6 1.3" stroke-dashoffset="8.2"/><path d="M897.5 396 V620" stroke="#fff" stroke-width="1" stroke-dasharray="2 2"/><path d="M924.5 272 V316" stroke="#fff" stroke-width="1" stroke-dasharray="3 3"/><path d="M924.5 317 V396" stroke="#fff" stroke-width="1" stroke-dasharray="3 1.5 6 1.3" stroke-dashoffset="8.2"/><path d="M924.5 396 V620" stroke="#fff" stroke-width="1" stroke-dasharray="2 2"/><path d="M951.5 272 V316" stroke="#fff" stroke-width="1" stroke-dasharray="3 3"/><path d="M951.5 317 V396" stroke="#fff" stroke-width="1" stroke-dasharray="3 1.5 6 1.3" stroke-dashoffset="8.2"/><path d="M951.5 396 V620" stroke="#fff" stroke-width="1" stroke-dasharray="2 2"/><path d="M978.5 272 V316" stroke="#fff" stroke-width="1" stroke-dasharray="3 3"/><path d="M978.5 317 V396" stroke="#fff" stroke-width="1" stroke-dasharray="3 1.5 6 1.3" stroke-dashoffset="8.2"/><path d="M978.5 396 V620" stroke="#fff" stroke-width="1" stroke-dasharray="2 2"/><path d="M1004.5 272 V316" stroke="#fff" stroke-width="1" stroke-dasharray="3 3"/><path d="M1004.5 317 V396" stroke="#fff" stroke-width="1" stroke-dasharray="3 1.5 6 1.3" stroke-dashoffset="8.2"/><path d="M1004.5 396 V620" stroke="#fff" stroke-width="1" stroke-dasharray="2 2"/><path d="M1031.5 272 V316" stroke="#fff" stroke-width="1" stroke-dasharray="3 3"/><path d="M1031.5 317 V396" stroke="#fff" stroke-width="1" stroke-dasharray="3 1.5 6 1.3" stroke-dashoffset="8.2"/><path d="M1031.5 396 V620" stroke="#fff" stroke-width="1" stroke-dasharray="2 2"/><path d="M1058.5 272 V316" stroke="#fff" stroke-width="1" stroke-dasharray="3 3"/><path d="M1058.5 317 V396" stroke="#fff" stroke-width="1" stroke-dasharray="3 1.5 6 1.3" stroke-dashoffset="8.2"/><path d="M1058.5 396 V620" stroke="#fff" stroke-width="1" stroke-dasharray="2 2"/><path d="M1085.5 272 V316" stroke="#fff" stroke-width="1" stroke-dasharray="3 3"/><path d="M1085.5 317 V396" stroke="#fff" stroke-width="1" stroke-dasharray="3 1.5 6 1.3" stroke-dashoffset="8.2"/><path d="M1085.5 396 V620" stroke="#fff" stroke-width="1" stroke-dasharray="2 2"/><path d="M1112.5 272 V316" stroke="#fff" stroke-width="1" stroke-dasharray="3 3"/><path d="M1112.5 317 V396" stroke="#fff" stroke-width="1" stroke-dasharray="3 1.5 6 1.3" stroke-dashoffset="8.2"/><path d="M1112.5 396 V620" stroke="#fff" stroke-width="1" stroke-dasharray="2 2"/><path d="M1139.5 272 V316" stroke="#fff" stroke-width="1" stroke-dasharray="3 3"/><path d="M1139.5 317 V396" stroke="#fff" stroke-width="1" stroke-dasharray="3 1.5 6 1.3" stroke-dashoffset="8.2"/><path d="M1139.5 396 V620" stroke="#fff" stroke-width="1" stroke-dasharray="2 2"/><path d="M1165.5 272 V316" stroke="#fff" stroke-width="1" stroke-dasharray="3 3"/><path d="M1165.5 317 V396" stroke="#fff" stroke-width="1" stroke-dasharray="3 1.5 6 1.3" stroke-dashoffset="8.2"/><path d="M1165.5 396 V620" stroke="#fff" stroke-width="1" stroke-dasharray="2 2"/><path d="M1192.5 272 V316" stroke="#fff" stroke-width="1" stroke-dasharray="3 3"/><path d="M1192.5 317 V396" stroke="#fff" stroke-width="1" stroke-dasharray="3 1.5 6 1.3" stroke-dashoffset="8.2"/><path d="M1192.5 396 V620" stroke="#fff" stroke-width="1" stroke-dasharray="2 2"/><path d="M1219.5 272 V316" stroke="#fff" stroke-width="1" stroke-dasharray="3 3"/><path d="M1219.5 317 V396" stroke="#fff" stroke-width="1" stroke-dasharray="3 1.5 6 1.3" stroke-dashoffset="8.2"/><path d="M1219.5 396 V620" stroke="#fff" stroke-width="1" stroke-dasharray="2 2"/><path d="M1246.5 272 V316" stroke="#fff" stroke-width="1" stroke-dasharray="3 3"/><path d="M1246.5 317 V396" stroke="#fff" stroke-width="1" stroke-dasharray="3 1.5 6 1.3" stroke-dashoffset="8.2"/><path d="M1246.5 396 V620" stroke="#fff" stroke-width="1" stroke-dasharray="2 2"/><path d="M1273.5 272 V316" stroke="#fff" stroke-width="1" stroke-dasharray="3 3"/><path d="M1273.5 317 V396" stroke="#fff" stroke-width="1" stroke-dasharray="3 1.5 6 1.3" stroke-dashoffset="8.2"/><path d="M1273.5 396 V620" stroke="#fff" stroke-width="1" stroke-dasharray="2 2"/><path d="M1300.5 272 V316" stroke="#fff" stroke-width="1" stroke-dasharray="3 3"/><path d="M1300.5 317 V396" stroke="#fff" stroke-width="1" stroke-dasharray="3 1.5 6 1.3" stroke-dashoffset="8.2"/><path d="M1300.5 396 V620" stroke="#fff" stroke-width="1" stroke-dasharray="2 2"/><path d="M154.0 272 V316" stroke="#fff" stroke-width="2" stroke-dasharray="3 3"/><path d="M154.0 317 V337" stroke="#fff" stroke-width="2" stroke-dasharray="0 3 3 1 5 2 4 2"/><path d="M154.0 337 V396" stroke="#fff" stroke-width="2" stroke-dasharray="8 2 3 1.3"/><path d="M154.0 396 V620" stroke="#fff" stroke-width="2" stroke-dasharray="2 2"/><rect x="733" y="272" width="3" height="348" fill="#fff"/><path d="M732.5 272 V316" stroke="#fff" stroke-width="1" stroke-dasharray="3 3"/><path d="M732.5 317 V337" stroke="#fff" stroke-width="1" stroke-dasharray="0 3 3 1 5 2 4 2"/><path d="M732.5 337 V396" stroke="#fff" stroke-width="1" stroke-dasharray="8 2 3 1.3"/><path d="M732.5 396 V620" stroke="#fff" stroke-width="1" stroke-dasharray="2 2"/><path d="M736.5 272 V316" stroke="#fff" stroke-width="1" stroke-dasharray="3 3"/><path d="M736.5 317 V337" stroke="#fff" stroke-width="1" stroke-dasharray="0 3 3 1 5 2 4 2"/><path d="M736.5 337 V396" stroke="#fff" stroke-width="1" stroke-dasharray="8 2 3 1.3"/><path d="M736.5 396 V620" stroke="#fff" stroke-width="1" stroke-dasharray="2 2"/><path d="M154 316.5 H1443" stroke="#fff" stroke-width="1" stroke-dasharray="3 3"/><path d="M154 441.5 H1443" stroke="#fff" stroke-width="1" stroke-dasharray="3 3"/><path d="M154 566.5 H1443" stroke="#fff" stroke-width="1" stroke-dasharray="3 3"/><text x="156.5" y="328" font-family="'Liberation Sans', sans-serif" font-size="11" fill="#fff" textLength="42" lengthAdjust="spacingAndGlyphs">10.47.38</text><text x="156.5" y="453" font-family="'Liberation Sans', sans-serif" font-size="11" fill="#fff" textLength="42" lengthAdjust="spacingAndGlyphs">10.47.08</text><text x="156.5" y="578" font-family="'Liberation Sans', sans-serif" font-size="11" fill="#fff" textLength="42" lengthAdjust="spacingAndGlyphs">10.46.38</text><rect x="1314" y="272" width="4" height="348" fill="#fff"/><path d="M1376 272H1376V273H1376V274H1376V275H1377V276H1376V277H1377V278H1377V279H1376V280H1377V281H1376V282H1376V283H1376V284H1377V285H1377V286H1377V287H1376V288H1376V289H1377V290H1376V291H1376V292H1377V293H1377V294H1376V295H1376V296H1376V297H1376V298H1376V299H1376V300H1377V301H1376V302H1377V303H1376V304H1377V305H1376V306H1376V307H1376V308H1376V309H1376V310H1376V311H1376V312H1377V313H1376V314H1376V315H1376V316H1376V317H1377V318H1377V319H1376V320H1376V321H1377V322H1376V323H1376V324H1376V325H1377V326H1376V327H1377V328H1376V329H1377V330H1376V331H1376V332H1377V333H1376V334H1376V335H1376V336H1376V337H1377V338H1376V339H1376V340H1376V341H1376V342H1377V343H1376V344H1376V345H1377V346H1376V347H1376V348H1376V349H1376V350H1376V351H1376V352H1376V353H1376V354H1377V355H1376V356H1376V357H1376V358H1377V359H1377V360H1376V361H1377V362H1376V363H1377V364H1376V365H1376V366H1376V367H1376V368H1376V369H1376V370H1377V371H1376V372H1376V373H1377V374H1376V375H1376V376H1377V377H1376V378H1376V379H1376V380H1376V381H1376V382H1377V383H1376V384H1376V385H1377V386H1377V387H1376V388H1376V389H1376V390H1376V391H1376V392H1377V393H1376V394H1376V395H1377V396H1376V397H1376V398H1376V399H1376V400H1376V401H1376V402H1376V403H1377V404H1376V405H1376V406H1377V407H1377V408H1377V409H1376V410H1376V411H1377V412H1377V413H1376V414H1376V415H1376V416H1376V417H1376V418H1376V419H1377V420H1376V421H1376V422H1376V423H1376V424H1376V425H1376V426H1377V427H1376V428H1376V429H1376V430H1376V431H1376V432H1376V433H1376V434H1377V435H1376V436H1376V437H1376V438H1376V439H1376V440H1377V441H1377V442H1376V443H1377V444H1377V445H1376V446H1376V447H1376V448H1376V449H1376V450H1376V451H1376V452H1377V453H1376V454H1376V455H1377V456H1377V457H1376V458H1376V459H1376V460H1376V461H1376V462H1376V463H1376V464H1376V465H1376V466H1376V467H1376V468H1376V469H1377V470H1376V471H1376V472H1376V473H1376V474H1376V475H1376V476H1376V477H1377V478H1376V479H1377V480H1376V481H1376V482H1376V483H1376V484H1376V485H1376V486H1377V487H1376V488H1376V489H1377V490H1376V491H1376V492H1376V493H1377V494H1376V495H1376V496H1376V497H1377V498H1376V499H1376V500H1376V501H1376V502H1376V503H1377V504H1376V505H1377V506H1376V507H1376V508H1377V509H1376V510H1376V511H1376V512H1376V513H1376V514H1377V515H1376V516H1377V517H1376V518H1376V519H1376V520H1376V521H1377V522H1376V523H1377V524H1377V525H1376V526H1376V527H1377V528H1377V529H1376V530H1376V531H1376V532H1376V533H1377V534H1376V535H1376V536H1376V537H1376V538H1376V539H1376V540H1376V541H1376V542H1376V543H1376V544H1376V545H1376V546H1376V547H1376V548H1376V549H1377V550H1376V551H1376V552H1376V553H1377V554H1377V555H1376V556H1376V557H1376V558H1377V559H1377V560H1376V561H1376V562H1376V563H1376V564H1376V565H1376V566H1376V567H1376V568H1376V569H1377V570H1376V571H1377V572H1376V573H1376V574H1377V575H1377V576H1378V577H1377V578H1377V579H1378V580H1377V581H1377V582H1377V583H1377V584H1379V585H1379V586H1378V587H1378V588H1378V589H1378V590H1378V591H1378V592H1378V593H1378V594H1379V595H1379V596H1379V597H1379V598H1379V599H1379V600H1379V601H1379V602H1379V603H1379V604H1379V605H1379V606H1379V607H1379V608H1379V609H1379V610H1379V611H1379V612H1379V613H1379V614H1379V615H1379V616H1379V617H1379V618H1379V619H1379V620H1381H1381V619H1381V618H1381V617H1381V616H1381V615H1381V614H1381V613H1381V612H1381V611H1381V610H1381V609H1381V608H1381V607H1381V606H1381V605H1381V604H1381V603H1381V602H1381V601H1381V600H1381V599H1381V598H1381V597H1381V596H1381V595H1382V594H1382V593H1382V592H1382V591H1382V590H1381V589H1382V588H1382V587H1382V586H1382V585H1382V584H1382V583H1382V582H1382V581H1382V580H1382V579H1381V578H1382V577H1382V576H1381V575H1381V574H1383V573H1382V572H1382V571H1383V570H1383V569H1382V568H1383V567H1383V566H1382V565H1383V564H1383V563H1382V562H1383V561H1383V560H1383V559H1383V558H1383V557H1383V556H1382V555H1382V554H1382V553H1383V552H1382V551H1382V550H1382V549H1382V548H1383V547H1382V546H1383V545H1382V544H1382V543H1383V542H1383V541H1383V540H1383V539H1383V538H1383V537H1382V536H1383V535H1383V534H1383V533H1383V532H1383V531H1382V530H1383V529H1383V528H1383V527H1383V526H1383V525H1383V524H1383V523H1383V522H1382V521H1382V520H1383V519H1383V518H1383V517H1383V516H1383V515H1382V514H1383V513H1383V512H1383V511H1383V510H1382V509H1383V508H1382V507H1383V506H1383V505H1383V504H1383V503H1383V502H1383V501H1382V500H1383V499H1383V498H1382V497H1383V496H1382V495H1383V494H1383V493H1383V492H1383V491H1383V490H1383V489H1383V488H1383V487H1383V486H1383V485H1383V484H1382V483H1382V482H1383V481H1383V480H1382V479H1383V478H1382V477H1382V476H1383V475H1383V474H1382V473H1383V472H1383V471H1383V470H1383V469H1383V468H1383V467H1383V466H1383V465H1383V464H1383V463H1383V462H1383V461H1382V460H1382V459H1382V458H1382V457H1382V456H1383V455H1383V454H1383V453H1383V452H1382V451H1383V450H1383V449H1382V448H1383V447H1383V446H1383V445H1383V444H1382V443H1383V442H1383V441H1383V440H1382V439H1382V438H1382V437H1382V436H1382V435H1383V434H1382V433H1383V432H1383V431H1383V430H1383V429H1383V428H1383V427H1383V426H1383V425H1383V424H1383V423H1382V422H1383V421H1382V420H1383V419H1383V418H1383V417H1382V416H1382V415H1383V414H1383V413H1383V412H1383V411H1383V410H1383V409H1383V408H1382V407H1383V406H1383V405H1382V404H1382V403H1383V402H1383V401H1382V400H1383V399H1382V398H1383V397H1383V396H1382V395H1383V394H1383V393H1383V392H1383V391H1382V390H1383V389H1383V388H1383V387H1383V386H1383V385H1383V384H1383V383H1382V382H1383V381H1383V380H1383V379H1383V378H1383V377H1383V376H1383V375H1383V374H1383V373H1383V372H1383V371H1383V370H1383V369H1382V368H1383V367H1383V366H1383V365H1383V364H1383V363H1383V362H1382V361H1383V360H1383V359H1383V358H1382V357H1382V356H1382V355H1383V354H1383V353H1383V352H1383V351H1383V350H1383V349H1383V348H1382V347H1383V346H1383V345H1383V344H1383V343H1383V342H1383V341H1383V340H1383V339H1383V338H1383V337H1383V336H1383V335H1383V334H1383V333H1383V332H1383V331H1383V330H1383V329H1383V328H1383V327H1383V326H1383V325H1383V324H1382V323H1383V322H1383V321H1383V320H1382V319H1383V318H1382V317H1382V316H1383V315H1383V314H1383V313H1383V312H1383V311H1383V310H1383V309H1383V308H1383V307H1382V306H1383V305H1382V304H1383V303H1383V302H1383V301H1383V300H1382V299H1383V298H1383V297H1383V296H1383V295H1383V294H1383V293H1383V292H1382V291H1382V290H1383V289H1383V288H1383V287H1383V286H1382V285H1382V284H1383V283H1383V282H1383V281H1383V280H1383V279H1383V278H1382V277H1383V276H1383V275H1383V274H1382V273H1383V272Z" fill="#fff"/></svg>
</body></html>
